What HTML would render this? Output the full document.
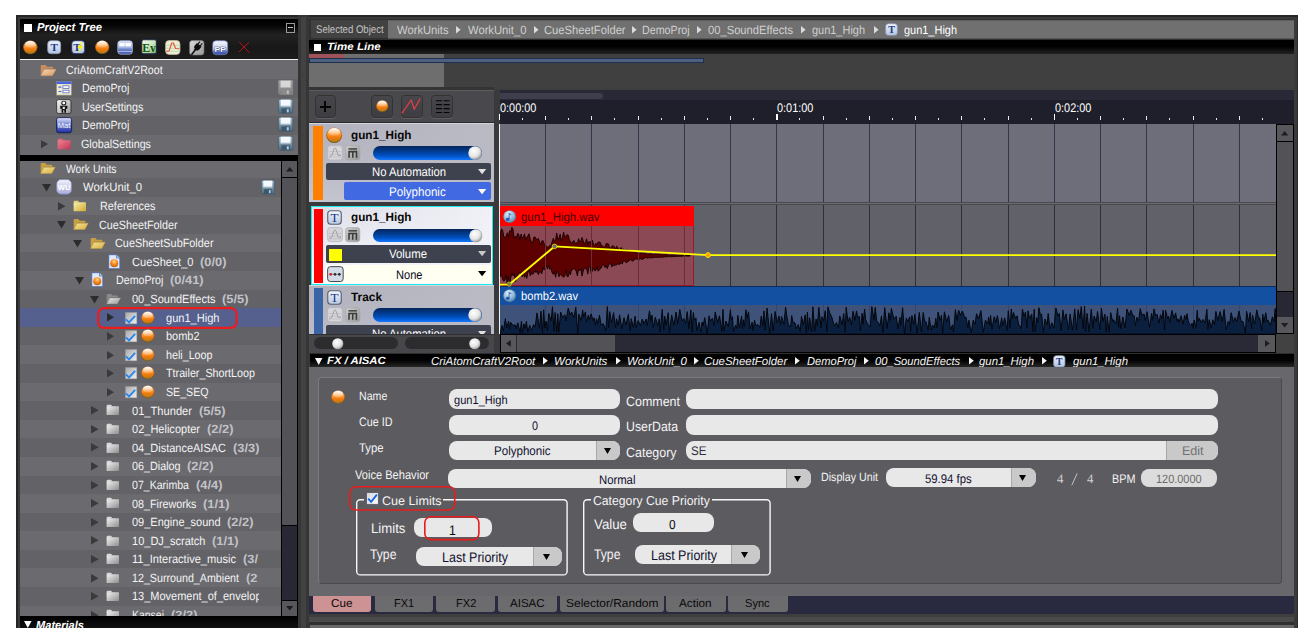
<!DOCTYPE html><html><head><meta charset="utf-8"><title>CRI Atom Craft</title><style>html,body{margin:0;padding:0;background:#fff;}#app{position:relative;width:1312px;height:640px;overflow:hidden;background:#fff;}#app div,#app svg{position:absolute;}#app svg{overflow:visible;display:block}.clip{overflow:hidden}.t{text-rendering:geometricPrecision}</style></head><body><div id="app">
<div style="left:16.00px;top:15.00px;width:1282.00px;height:613.00px;background:#3a3a3a;"></div>
<div style="left:16.00px;top:15.00px;width:1282.00px;height:1.50px;background:#262626;"></div>
<div style="left:16.00px;top:15.00px;width:1.50px;height:613.00px;background:#262626;"></div>
<div style="left:1296.50px;top:15.00px;width:1.50px;height:613.00px;background:#2a2a2a;"></div>
<div style="left:298.00px;top:15.00px;width:11.40px;height:613.00px;background:#363636;"></div>
<div style="left:301.20px;top:16.50px;width:4.90px;height:611.50px;background:#424242;"></div>
<div style="left:19.50px;top:18.70px;width:278.50px;height:16.50px;background:linear-gradient(#000,#050505 40%,#222);"></div>
<div style="left:19.50px;top:35.20px;width:278.50px;height:24.00px;background:linear-gradient(#222,#181818 50%,#1c1c1c);"></div>
<div style="left:23.60px;top:23.60px;width:8.20px;height:8.20px;background:#fff;"></div>
<div class="t" style="left:36.50px;top:21px;font:italic bold 11.5px/14px 'Liberation Sans',sans-serif;color:#fff;white-space:nowrap;transform-origin:0 0;transform:scaleX(0.9809);">Project Tree</div>
<div style="left:286.30px;top:23.00px;width:8.60px;height:10.00px;border:1px solid #9a9a9a;box-sizing:border-box;"></div>
<div style="left:288.30px;top:27.40px;width:4.60px;height:1.10px;background:#c0c0c0;"></div>
<svg style="left:23.20px;top:40.40px;" width="14.60" height="14.60" viewBox="0 0 20 20" preserveAspectRatio="none"><defs><linearGradient id="g1" x1="0" y1="0" x2="0" y2="1"><stop offset="0" stop-color="#ffc890"/><stop offset="0.42" stop-color="#ff9a38"/><stop offset="0.62" stop-color="#f47c0c"/><stop offset="0.82" stop-color="#cc7a16"/><stop offset="1" stop-color="#988028"/></linearGradient><linearGradient id="g2" x1="0" y1="0" x2="0" y2="1"><stop offset="0" stop-color="#fff" stop-opacity="0.95"/><stop offset="1" stop-color="#fff" stop-opacity="0.1"/></linearGradient><radialGradient id="g3" cx="0.5" cy="0.5" r="0.5"><stop offset="0.82" stop-color="#000" stop-opacity="0"/><stop offset="1" stop-color="#402000" stop-opacity="0.45"/></radialGradient></defs><ellipse cx="10" cy="10" rx="9.7" ry="9.4" fill="url(#g1)"/><ellipse cx="10" cy="10" rx="9.7" ry="9.4" fill="url(#g3)"/><ellipse cx="10" cy="6" rx="7.2" ry="4.8" fill="url(#g2)"/></svg>
<svg style="left:47.00px;top:40.40px;" width="14.40" height="14.40" viewBox="0 0 20 20" preserveAspectRatio="none"><defs><linearGradient id="g4" x1="0" y1="0" x2="0" y2="1"><stop offset="0" stop-color="#eef3fa"/><stop offset="1" stop-color="#b4c4dc"/></linearGradient></defs><rect x="1" y="1" width="18" height="18" rx="4.5" fill="url(#g4)" stroke="#8898b8" stroke-width="1.2"/><text x="10" y="15.4" text-anchor="middle" font-family="Liberation Serif,serif" font-weight="bold" font-size="15.5" fill="#163a8c">T</text></svg>
<svg style="left:70.80px;top:40.40px;" width="14.40" height="14.40" viewBox="0 0 20 20" preserveAspectRatio="none"><defs><linearGradient id="g5" x1="0" y1="0" x2="0" y2="1"><stop offset="0" stop-color="#eef3fa"/><stop offset="1" stop-color="#b4c4dc"/></linearGradient></defs><rect x="1" y="1" width="18" height="18" rx="4.5" fill="url(#g5)" stroke="#1c2c6c" stroke-width="1.2"/><text x="8.4" y="15.4" text-anchor="middle" font-family="Liberation Serif,serif" font-weight="bold" font-size="15.5" fill="#163a8c">T</text><path d="M14 3 L9 11 L12 11 L10 18.5 L16.5 8.5 L13 8.5 L16 3Z" fill="#fff200"/></svg>
<svg style="left:95.00px;top:40.40px;" width="14.40" height="14.40" viewBox="0 0 20 20" preserveAspectRatio="none"><defs><linearGradient id="g6" x1="0" y1="0" x2="0" y2="1"><stop offset="0" stop-color="#ffc890"/><stop offset="0.42" stop-color="#ff9a38"/><stop offset="0.62" stop-color="#f47c0c"/><stop offset="0.82" stop-color="#cc7a16"/><stop offset="1" stop-color="#988028"/></linearGradient><linearGradient id="g7" x1="0" y1="0" x2="0" y2="1"><stop offset="0" stop-color="#fff" stop-opacity="0.95"/><stop offset="1" stop-color="#fff" stop-opacity="0.1"/></linearGradient><radialGradient id="g8" cx="0.5" cy="0.5" r="0.5"><stop offset="0.82" stop-color="#000" stop-opacity="0"/><stop offset="1" stop-color="#402000" stop-opacity="0.45"/></radialGradient></defs><ellipse cx="10" cy="10" rx="9.7" ry="9.4" fill="url(#g6)"/><ellipse cx="10" cy="10" rx="9.7" ry="9.4" fill="url(#g8)"/><ellipse cx="10" cy="6" rx="7.2" ry="4.8" fill="url(#g7)"/></svg>
<svg style="left:117.40px;top:39.80px;" width="16.20" height="15.00" viewBox="0 0 22 20" preserveAspectRatio="none"><defs><linearGradient id="g9" x1="0" y1="0" x2="0" y2="1"><stop offset="0" stop-color="#e2e8f8"/><stop offset="0.5" stop-color="#a4b4e0"/><stop offset="0.62" stop-color="#7086c8"/><stop offset="1" stop-color="#3a54a8"/></linearGradient></defs><rect x="1" y="1" width="20" height="18" rx="4" fill="url(#g9)" stroke="#a8b4dc" stroke-width="1"/><rect x="3.2" y="4.2" width="7.2" height="4.2" fill="#ffffff"/><rect x="11.6" y="4.2" width="7.2" height="4.2" fill="#ffffff"/><rect x="1.5" y="14.8" width="19" height="1.1" fill="#b8c4ec"/></svg>
<svg style="left:141.20px;top:39.40px;" width="16.20" height="15.60" viewBox="0 0 22 21" preserveAspectRatio="none"><defs><linearGradient id="g10" x1="0" y1="0" x2="1" y2="1"><stop offset="0" stop-color="#f4faee"/><stop offset="0.5" stop-color="#cfe6c0"/><stop offset="1" stop-color="#7cac6c"/></linearGradient></defs><rect x="1" y="1" width="20" height="19" rx="2.5" fill="url(#g10)" stroke="#1e2e4a" stroke-width="1.6"/><text x="11" y="17" text-anchor="middle" font-family="Liberation Serif,serif" font-weight="bold" font-size="17" fill="#0a560a" textLength="18.6" lengthAdjust="spacingAndGlyphs">Ev</text></svg>
<svg style="left:165.20px;top:39.80px;" width="15.60" height="15.00" viewBox="0 0 20 20" preserveAspectRatio="none"><rect x="0.8" y="0.8" width="18.4" height="18.4" rx="4.5" fill="#f0ecd2" stroke="#c4c0a4" stroke-width="1"/><path d="M1.6 7H18.4M1.6 11H18.4M1.6 15H18.4" stroke="#a4dcb4" stroke-width="1.1"/><path d="M1.6 15.4 L5.4 14.4 L8.6 4 L10.8 4 L13.6 11.4 L18.4 11.6" fill="none" stroke="#e4503c" stroke-width="1.4" stroke-linejoin="round"/></svg>
<svg style="left:189.00px;top:39.60px;" width="15.60" height="15.60" viewBox="0 0 20 20" preserveAspectRatio="none"><defs><linearGradient id="g11" x1="0" y1="0" x2="1" y2="1"><stop offset="0" stop-color="#dcdcdc"/><stop offset="1" stop-color="#969696"/></linearGradient></defs><rect x="0.8" y="0.8" width="18.4" height="18.4" rx="3.5" fill="url(#g11)" stroke="#7a7a7a" stroke-width="0.8"/><g transform="translate(10.6 9.4) rotate(38)" fill="#0c0c0c"><rect x="-2.6" y="-8" width="1.5" height="4"/><rect x="1.1" y="-8" width="1.5" height="4"/><path d="M-3.8 -4.2 H3.8 V0.6 Q3.8 3.2 1.4 3.6 V5 H-1.4 V3.6 Q-3.8 3.2 -3.8 0.6Z"/><rect x="-1" y="4.6" width="2" height="7.4"/></g></svg>
<svg style="left:212.40px;top:39.60px;" width="16.40" height="15.40" viewBox="0 0 22 21" preserveAspectRatio="none"><defs><linearGradient id="g12" x1="0" y1="0" x2="0" y2="1"><stop offset="0" stop-color="#f6f8fd"/><stop offset="0.6" stop-color="#c6d0ea"/><stop offset="0.74" stop-color="#6078c4"/><stop offset="1" stop-color="#3048a4"/></linearGradient></defs><rect x="1" y="1" width="20" height="19" rx="4.5" fill="url(#g12)" stroke="#7484c0" stroke-width="1"/><text x="11" y="17" text-anchor="middle" font-family="Liberation Sans,sans-serif" font-weight="bold" font-size="10.5" fill="#fff" stroke="#1a2a6c" stroke-width="1" paint-order="stroke" textLength="15.5" lengthAdjust="spacingAndGlyphs">PP</text></svg>
<svg style="left:237.60px;top:41.00px;" width="12.60" height="12.60" viewBox="0 0 20 20" preserveAspectRatio="none"><path d="M2.5 2 L17.5 18 M17 2.5 L2 17" stroke="#c01616" stroke-width="1.5" stroke-linecap="round"/></svg>
<div style="left:19.50px;top:59.00px;width:278.50px;height:1.30px;background:#f0f0f0;"></div>
<div style="left:19.50px;top:60.30px;width:278.50px;height:18.70px;background:#6a6a6f;"></div>
<div style="left:19.50px;top:79.00px;width:278.50px;height:18.50px;background:#626267;"></div>
<div style="left:19.50px;top:97.50px;width:278.50px;height:18.50px;background:#6a6a6f;"></div>
<div style="left:19.50px;top:116.00px;width:278.50px;height:18.60px;background:#626267;"></div>
<div style="left:19.50px;top:134.60px;width:278.50px;height:20.00px;background:#6a6a6f;"></div>
<svg style="left:39.60px;top:63.60px;" width="16.60" height="12.40" viewBox="0 0 22 18" preserveAspectRatio="none"><defs><linearGradient id="g13" x1="0" y1="0" x2="1" y2="1"><stop offset="0" stop-color="#f6d8b0"/><stop offset="1" stop-color="#d89868"/></linearGradient></defs><path d="M1 16.5 V3 Q1 1.5 2.5 1.5 H7.5 L9.5 4 H16.5 Q17.5 4 17.5 5 V7 H6 L1 16.5Z" fill="#c88c60"/><path d="M1 17 L5.6 7.6 H21.4 L16.6 17Z" fill="url(#g13)" stroke="#c88c60" stroke-width="0.6"/></svg>
<div class="t" style="left:65.60px;top:63px;font:normal normal 12px/14px 'Liberation Sans',sans-serif;color:#f4f4f4;white-space:nowrap;transform-origin:0 0;transform:scaleX(0.8833);">CriAtomCraftV2Root</div>
<svg style="left:56.00px;top:81.00px;" width="16.00" height="14.60" viewBox="0 0 22 20" preserveAspectRatio="none"><rect x="0.6" y="0.6" width="20.8" height="18.8" fill="#efe9cf" stroke="#8e8c7c" stroke-width="0.9"/><rect x="0.6" y="0.6" width="20.8" height="3.6" fill="#4a66d8"/><rect x="9.5" y="6.6" width="8.4" height="3.6" fill="#fff" stroke="#4a66c8" stroke-width="1"/><rect x="9.5" y="12.6" width="8.4" height="3.6" fill="#fff" stroke="#4a66c8" stroke-width="1"/><path d="M3.4 8.4 H7.4 M3.4 14.4 H7.4" stroke="#4a66c8" stroke-width="1.4"/></svg>
<div class="t" style="left:82.20px;top:81px;font:normal normal 12px/14px 'Liberation Sans',sans-serif;color:#f4f4f4;white-space:nowrap;transform-origin:0 0;transform:scaleX(0.8884);">DemoProj</div>
<svg style="left:56.40px;top:99.40px;" width="15.60" height="15.20" viewBox="0 0 20 20" preserveAspectRatio="none"><defs><linearGradient id="g14" x1="0" y1="0" x2="1" y2="1"><stop offset="0" stop-color="#f8f8f8"/><stop offset="1" stop-color="#9a9a9a"/></linearGradient></defs><rect x="0.8" y="0.8" width="18.4" height="18.4" rx="2.5" fill="url(#g14)" stroke="#222" stroke-width="1"/><circle cx="10" cy="5.4" r="2.6" fill="#fff" stroke="#111" stroke-width="1.3"/><path d="M5.4 9 H14.6 V13 H12.8 V18 H7.2 V13 H5.4Z" fill="#111"/><rect x="8.6" y="10.2" width="2.8" height="3" fill="#e8e8e8"/><rect x="9.4" y="14.6" width="1.2" height="3.4" fill="#e8e8e8"/></svg>
<div class="t" style="left:82.20px;top:100px;font:normal normal 12px/14px 'Liberation Sans',sans-serif;color:#f4f4f4;white-space:nowrap;transform-origin:0 0;transform:scaleX(0.8938);">UserSettings</div>
<svg style="left:56.00px;top:117.40px;" width="16.20" height="16.40" viewBox="0 0 22 22" preserveAspectRatio="none"><defs><linearGradient id="g15" x1="0" y1="0" x2="0" y2="1"><stop offset="0" stop-color="#dfe4f8"/><stop offset="0.5" stop-color="#6a7cd0"/><stop offset="1" stop-color="#1c2c9c"/></linearGradient></defs><rect x="0.8" y="0.8" width="20.4" height="20.4" rx="3" fill="url(#g15)" stroke="#141c50" stroke-width="1.2"/><text x="11" y="15" text-anchor="middle" font-family="Liberation Sans,sans-serif" font-size="9.5" fill="#fff" textLength="17" lengthAdjust="spacingAndGlyphs">Mat</text></svg>
<div class="t" style="left:82.20px;top:118px;font:normal normal 12px/14px 'Liberation Sans',sans-serif;color:#f4f4f4;white-space:nowrap;transform-origin:0 0;transform:scaleX(0.8884);">DemoProj</div>
<svg style="left:41.40px;top:140.00px;" width="7.00" height="8.20" viewBox="0 0 7 8.2" preserveAspectRatio="none"><path d="M0 0 L7 4.1 L0 8.2Z" fill="#3a3a3a"/></svg>
<svg style="left:56.60px;top:138.20px;" width="14.40" height="11.60" viewBox="0 0 18 16" preserveAspectRatio="none"><defs><linearGradient id="g16" x1="0" y1="0" x2="1" y2="1"><stop offset="0" stop-color="#f08090"/><stop offset="1" stop-color="#c03858"/></linearGradient></defs><path d="M0.8 3 Q0.8 1 2.4 1 H6.6 L8.6 3.4 H0.8Z" fill="#e06878"/><rect x="0.8" y="3.2" width="16.4" height="12.2" rx="0.8" fill="url(#g16)"/></svg>
<div class="t" style="left:81.40px;top:137px;font:normal normal 12px/14px 'Liberation Sans',sans-serif;color:#f4f4f4;white-space:nowrap;transform-origin:0 0;transform:scaleX(0.8969);">GlobalSettings</div>
<svg style="left:278.00px;top:80.00px;" width="15.20" height="15.00" viewBox="0 0 20 20" preserveAspectRatio="none"><defs><linearGradient id="g17" x1="0" y1="0" x2="0" y2="1"><stop offset="0" stop-color="#a4a4a4"/><stop offset="1" stop-color="#7c7c7c"/></linearGradient></defs><path d="M0.6 0.6 H19.4 V19.4 H2.4 L0.6 17.6Z" fill="url(#g17)" stroke="#8c8c8c" stroke-width="0.8"/><rect x="3.4" y="0.8" width="13.2" height="9.4" fill="#d8d8d8"/><rect x="3.4" y="9.2" width="13.2" height="1.2" fill="#b0b0b0"/><rect x="4.6" y="12.8" width="11" height="6.6" fill="#8a8a8a"/><rect x="11.6" y="14" width="2.6" height="4.4" fill="#c4c4c4"/></svg>
<svg style="left:278.00px;top:98.80px;" width="15.20" height="14.60" viewBox="0 0 20 20" preserveAspectRatio="none"><defs><linearGradient id="g18" x1="0" y1="0" x2="0" y2="1"><stop offset="0" stop-color="#a8bccc"/><stop offset="1" stop-color="#4c6a80"/></linearGradient></defs><path d="M0.6 0.6 H19.4 V19.4 H2.4 L0.6 17.6Z" fill="url(#g18)" stroke="#3c5464" stroke-width="0.8"/><rect x="3.4" y="0.8" width="13.2" height="9.4" fill="#f4f8ff"/><rect x="3.4" y="9.2" width="13.2" height="1.2" fill="#9cb4c8"/><rect x="4.6" y="12.8" width="11" height="6.6" fill="#3e5668"/><rect x="11.6" y="14" width="2.6" height="4.4" fill="#a8d0f4"/></svg>
<svg style="left:278.00px;top:117.40px;" width="15.20" height="14.60" viewBox="0 0 20 20" preserveAspectRatio="none"><defs><linearGradient id="g19" x1="0" y1="0" x2="0" y2="1"><stop offset="0" stop-color="#a8bccc"/><stop offset="1" stop-color="#4c6a80"/></linearGradient></defs><path d="M0.6 0.6 H19.4 V19.4 H2.4 L0.6 17.6Z" fill="url(#g19)" stroke="#3c5464" stroke-width="0.8"/><rect x="3.4" y="0.8" width="13.2" height="9.4" fill="#f4f8ff"/><rect x="3.4" y="9.2" width="13.2" height="1.2" fill="#9cb4c8"/><rect x="4.6" y="12.8" width="11" height="6.6" fill="#3e5668"/><rect x="11.6" y="14" width="2.6" height="4.4" fill="#a8d0f4"/></svg>
<svg style="left:278.00px;top:136.00px;" width="15.20" height="14.60" viewBox="0 0 20 20" preserveAspectRatio="none"><defs><linearGradient id="g20" x1="0" y1="0" x2="0" y2="1"><stop offset="0" stop-color="#a8bccc"/><stop offset="1" stop-color="#4c6a80"/></linearGradient></defs><path d="M0.6 0.6 H19.4 V19.4 H2.4 L0.6 17.6Z" fill="url(#g20)" stroke="#3c5464" stroke-width="0.8"/><rect x="3.4" y="0.8" width="13.2" height="9.4" fill="#f4f8ff"/><rect x="3.4" y="9.2" width="13.2" height="1.2" fill="#9cb4c8"/><rect x="4.6" y="12.8" width="11" height="6.6" fill="#3e5668"/><rect x="11.6" y="14" width="2.6" height="4.4" fill="#a8d0f4"/></svg>
<div style="left:19.50px;top:154.60px;width:278.50px;height:6.00px;background:#000;"></div>
<div style="left:19.50px;top:160.60px;width:261.50px;height:17.49px;background:#6a6a6f;"></div>
<div style="left:19.50px;top:178.09px;width:261.50px;height:18.59px;background:#626267;"></div>
<div style="left:19.50px;top:196.68px;width:261.50px;height:18.59px;background:#6a6a6f;"></div>
<div style="left:19.50px;top:215.27px;width:261.50px;height:18.59px;background:#626267;"></div>
<div style="left:19.50px;top:233.86px;width:261.50px;height:18.59px;background:#6a6a6f;"></div>
<div style="left:19.50px;top:252.45px;width:261.50px;height:18.59px;background:#626267;"></div>
<div style="left:19.50px;top:271.04px;width:261.50px;height:18.59px;background:#6a6a6f;"></div>
<div style="left:19.50px;top:289.63px;width:261.50px;height:18.59px;background:#626267;"></div>
<div style="left:19.50px;top:308.22px;width:261.50px;height:18.59px;background:#55608e;"></div>
<div style="left:19.50px;top:326.81px;width:261.50px;height:18.59px;background:#626267;"></div>
<div style="left:19.50px;top:345.40px;width:261.50px;height:18.59px;background:#6a6a6f;"></div>
<div style="left:19.50px;top:363.99px;width:261.50px;height:18.59px;background:#626267;"></div>
<div style="left:19.50px;top:382.58px;width:261.50px;height:18.59px;background:#6a6a6f;"></div>
<div style="left:19.50px;top:401.17px;width:261.50px;height:18.59px;background:#626267;"></div>
<div style="left:19.50px;top:419.76px;width:261.50px;height:18.59px;background:#6a6a6f;"></div>
<div style="left:19.50px;top:438.35px;width:261.50px;height:18.59px;background:#626267;"></div>
<div style="left:19.50px;top:456.94px;width:261.50px;height:18.59px;background:#6a6a6f;"></div>
<div style="left:19.50px;top:475.53px;width:261.50px;height:18.59px;background:#626267;"></div>
<div style="left:19.50px;top:494.12px;width:261.50px;height:18.59px;background:#6a6a6f;"></div>
<div style="left:19.50px;top:512.71px;width:261.50px;height:18.59px;background:#626267;"></div>
<div style="left:19.50px;top:531.30px;width:261.50px;height:18.59px;background:#6a6a6f;"></div>
<div style="left:19.50px;top:549.89px;width:261.50px;height:18.59px;background:#626267;"></div>
<div style="left:19.50px;top:568.48px;width:261.50px;height:18.59px;background:#6a6a6f;"></div>
<div style="left:19.50px;top:587.07px;width:261.50px;height:18.59px;background:#626267;"></div>
<div style="left:19.50px;top:605.66px;width:261.50px;height:10.34px;background:#6a6a6f;"></div>
<div class="clip" style="left:0;top:0;width:259px;height:616px">
<svg style="left:40.40px;top:162.39px;" width="15.60" height="12.20" viewBox="0 0 22 18" preserveAspectRatio="none"><defs><linearGradient id="g21" x1="0" y1="0" x2="1" y2="1"><stop offset="0" stop-color="#f4e49a"/><stop offset="1" stop-color="#d8b040"/></linearGradient></defs><path d="M1 16.5 V3 Q1 1.5 2.5 1.5 H7.5 L9.5 4 H16.5 Q17.5 4 17.5 5 V7 H6 L1 16.5Z" fill="#c8a040"/><path d="M1 17 L5.6 7.6 H21.4 L16.6 17Z" fill="url(#g21)" stroke="#c8a040" stroke-width="0.6"/></svg>
<div class="t" style="left:65.75px;top:162px;font:normal normal 12px/14px 'Liberation Sans',sans-serif;color:#f4f4f4;white-space:nowrap;transform-origin:0 0;transform:scaleX(0.8639);">Work Units</div>
<svg style="left:56.40px;top:179.38px;" width="16.20" height="15.80" viewBox="0 0 22 21" preserveAspectRatio="none"><defs><linearGradient id="g22" x1="0" y1="0" x2="0" y2="1"><stop offset="0" stop-color="#f2f2fc"/><stop offset="1" stop-color="#a8acd8"/></linearGradient></defs><rect x="0.8" y="0.8" width="20.4" height="19.4" rx="6" fill="url(#g22)" stroke="#7a80b8" stroke-width="0.8"/><text x="11" y="14.6" text-anchor="middle" font-family="Liberation Sans,sans-serif" font-weight="bold" font-size="10.5" fill="#fff" textLength="17" lengthAdjust="spacingAndGlyphs">WU</text></svg>
<svg style="left:41.80px;top:184.19px;" width="9.00" height="7.60" viewBox="0 0 9 7.6" preserveAspectRatio="none"><path d="M0 0 H9 L4.5 7.6Z" fill="#2c2c2c"/></svg>
<div class="t" style="left:82.50px;top:180px;font:normal normal 12px/14px 'Liberation Sans',sans-serif;color:#f4f4f4;white-space:nowrap;transform-origin:0 0;transform:scaleX(0.9445);">WorkUnit_0</div>
<svg style="left:73.40px;top:199.97px;" width="13.60" height="11.60" viewBox="0 0 18 16" preserveAspectRatio="none"><defs><linearGradient id="g23" x1="0" y1="0" x2="1" y2="1"><stop offset="0" stop-color="#fbf2b0"/><stop offset="1" stop-color="#d0a830"/></linearGradient></defs><path d="M0.8 3 Q0.8 1 2.4 1 H6.6 L8.6 3.4 H0.8Z" fill="#e8d070"/><rect x="0.8" y="3.2" width="16.4" height="12.2" rx="0.8" fill="url(#g23)"/></svg>
<svg style="left:57.60px;top:201.78px;" width="7.60" height="8.40" viewBox="0 0 7.6 8.4" preserveAspectRatio="none"><path d="M0 0 L7.6 4.2 L0 8.4Z" fill="#3a3a3a"/></svg>
<div class="t" style="left:99.50px;top:199px;font:normal normal 12px/14px 'Liberation Sans',sans-serif;color:#f4f4f4;white-space:nowrap;transform-origin:0 0;transform:scaleX(0.9044);">References</div>
<svg style="left:73.40px;top:218.16px;" width="15.60" height="12.20" viewBox="0 0 22 18" preserveAspectRatio="none"><defs><linearGradient id="g24" x1="0" y1="0" x2="1" y2="1"><stop offset="0" stop-color="#f4e49a"/><stop offset="1" stop-color="#d8b040"/></linearGradient></defs><path d="M1 16.5 V3 Q1 1.5 2.5 1.5 H7.5 L9.5 4 H16.5 Q17.5 4 17.5 5 V7 H6 L1 16.5Z" fill="#c8a040"/><path d="M1 17 L5.6 7.6 H21.4 L16.6 17Z" fill="url(#g24)" stroke="#c8a040" stroke-width="0.6"/></svg>
<svg style="left:57.00px;top:221.36px;" width="9.00" height="7.60" viewBox="0 0 9 7.6" preserveAspectRatio="none"><path d="M0 0 H9 L4.5 7.6Z" fill="#2c2c2c"/></svg>
<div class="t" style="left:98.75px;top:218px;font:normal normal 12px/14px 'Liberation Sans',sans-serif;color:#f4f4f4;white-space:nowrap;transform-origin:0 0;transform:scaleX(0.8983);">CueSheetFolder</div>
<svg style="left:89.60px;top:236.75px;" width="15.60" height="12.20" viewBox="0 0 22 18" preserveAspectRatio="none"><defs><linearGradient id="g25" x1="0" y1="0" x2="1" y2="1"><stop offset="0" stop-color="#f4e49a"/><stop offset="1" stop-color="#d8b040"/></linearGradient></defs><path d="M1 16.5 V3 Q1 1.5 2.5 1.5 H7.5 L9.5 4 H16.5 Q17.5 4 17.5 5 V7 H6 L1 16.5Z" fill="#c8a040"/><path d="M1 17 L5.6 7.6 H21.4 L16.6 17Z" fill="url(#g25)" stroke="#c8a040" stroke-width="0.6"/></svg>
<svg style="left:73.20px;top:239.96px;" width="9.00" height="7.60" viewBox="0 0 9 7.6" preserveAspectRatio="none"><path d="M0 0 H9 L4.5 7.6Z" fill="#2c2c2c"/></svg>
<div class="t" style="left:114.50px;top:236px;font:normal normal 12px/14px 'Liberation Sans',sans-serif;color:#f4f4f4;white-space:nowrap;transform-origin:0 0;transform:scaleX(0.9058);">CueSheetSubFolder</div>
<svg style="left:108.00px;top:253.75px;" width="12.60" height="15.40" viewBox="0 0 17 21" preserveAspectRatio="none"><path d="M1 1 H11.5 L16 5.5 V20 H1Z" fill="#dfe8f6" stroke="#4866a8" stroke-width="1.1"/><path d="M11.5 1 V5.5 H16" fill="#b8c8e4" stroke="#4866a8" stroke-width="0.9"/><defs><radialGradient id="g26" cx="0.5" cy="0.3" r="0.7"><stop offset="0" stop-color="#ffd9a0"/><stop offset="0.45" stop-color="#ff9020"/><stop offset="1" stop-color="#c06010"/></radialGradient></defs><circle cx="8.4" cy="12.6" r="5.4" fill="url(#g26)"/></svg>
<div class="t" style="left:131.75px;top:255px;font:normal normal 12px/14px 'Liberation Sans',sans-serif;color:#f4f4f4;white-space:nowrap;transform-origin:0 0;transform:scaleX(0.9217);">CueSheet_0</div>
<div class="t" style="left:199.85px;top:255px;font:normal bold 12px/14px 'Liberation Sans',sans-serif;color:#c2c2c8;white-space:nowrap;transform-origin:0 0;transform:scaleX(1.0700);">(0/0)</div>
<svg style="left:91.00px;top:272.33px;" width="12.60" height="15.40" viewBox="0 0 17 21" preserveAspectRatio="none"><path d="M1 1 H11.5 L16 5.5 V20 H1Z" fill="#dfe8f6" stroke="#4866a8" stroke-width="1.1"/><path d="M11.5 1 V5.5 H16" fill="#b8c8e4" stroke="#4866a8" stroke-width="0.9"/><defs><radialGradient id="g27" cx="0.5" cy="0.3" r="0.7"><stop offset="0" stop-color="#ffd9a0"/><stop offset="0.45" stop-color="#ff9020"/><stop offset="1" stop-color="#c06010"/></radialGradient></defs><circle cx="8.4" cy="12.6" r="5.4" fill="url(#g27)"/></svg>
<svg style="left:74.60px;top:277.13px;" width="9.00" height="7.60" viewBox="0 0 9 7.6" preserveAspectRatio="none"><path d="M0 0 H9 L4.5 7.6Z" fill="#2c2c2c"/></svg>
<div class="t" style="left:115.50px;top:273px;font:normal normal 12px/14px 'Liberation Sans',sans-serif;color:#f4f4f4;white-space:nowrap;transform-origin:0 0;transform:scaleX(0.8884);">DemoProj</div>
<div class="t" style="left:169.50px;top:273px;font:normal bold 12px/14px 'Liberation Sans',sans-serif;color:#c2c2c8;white-space:nowrap;transform-origin:0 0;transform:scaleX(1.0700);">(0/41)</div>
<svg style="left:106.40px;top:292.93px;" width="15.00" height="11.60" viewBox="0 0 22 18" preserveAspectRatio="none"><defs><linearGradient id="g28" x1="0" y1="0" x2="1" y2="1"><stop offset="0" stop-color="#e8e8e8"/><stop offset="1" stop-color="#9a9a9a"/></linearGradient></defs><path d="M1 16.5 V3 Q1 1.5 2.5 1.5 H7.5 L9.5 4 H16.5 Q17.5 4 17.5 5 V7 H6 L1 16.5Z" fill="#8a8a8a"/><path d="M1 17 L5.6 7.6 H21.4 L16.6 17Z" fill="url(#g28)" stroke="#8a8a8a" stroke-width="0.6"/></svg>
<svg style="left:90.00px;top:295.73px;" width="9.00" height="7.60" viewBox="0 0 9 7.6" preserveAspectRatio="none"><path d="M0 0 H9 L4.5 7.6Z" fill="#2c2c2c"/></svg>
<div class="t" style="left:132.00px;top:292px;font:normal normal 12px/14px 'Liberation Sans',sans-serif;color:#f4f4f4;white-space:nowrap;transform-origin:0 0;transform:scaleX(0.9157);">00_SoundEffects</div>
<div class="t" style="left:222.10px;top:292px;font:normal bold 12px/14px 'Liberation Sans',sans-serif;color:#c2c2c8;white-space:nowrap;transform-origin:0 0;transform:scaleX(1.0700);">(5/5)</div>
<svg style="left:107.40px;top:313.32px;" width="7.00" height="8.40" viewBox="0 0 7 8.4" preserveAspectRatio="none"><path d="M0 0 L7 4.2 L0 8.4Z" fill="#2a2a2a"/></svg>
<svg style="left:124.70px;top:311.62px;" width="12.20" height="12.20" viewBox="0 0 20 20" preserveAspectRatio="none"><defs><linearGradient id="g29" x1="0" y1="0" x2="1" y2="1"><stop offset="0" stop-color="#a8a8a8"/><stop offset="1" stop-color="#f0f0f0"/></linearGradient></defs><rect x="0.5" y="0.5" width="19" height="19" fill="url(#g29)" stroke="#8c8c90" stroke-width="0.8"/><path d="M1.6 12.2 L6.6 17 L16.6 6.4" fill="none" stroke="#2486ee" stroke-width="3" stroke-linejoin="miter"/></svg>
<svg style="left:141.40px;top:310.52px;" width="13.60" height="13.60" viewBox="0 0 20 20" preserveAspectRatio="none"><defs><linearGradient id="g30" x1="0" y1="0" x2="0" y2="1"><stop offset="0" stop-color="#ffc890"/><stop offset="0.42" stop-color="#ff9a38"/><stop offset="0.62" stop-color="#f47c0c"/><stop offset="0.82" stop-color="#cc7a16"/><stop offset="1" stop-color="#988028"/></linearGradient><linearGradient id="g31" x1="0" y1="0" x2="0" y2="1"><stop offset="0" stop-color="#fff" stop-opacity="0.95"/><stop offset="1" stop-color="#fff" stop-opacity="0.1"/></linearGradient><radialGradient id="g32" cx="0.5" cy="0.5" r="0.5"><stop offset="0.82" stop-color="#000" stop-opacity="0"/><stop offset="1" stop-color="#402000" stop-opacity="0.45"/></radialGradient></defs><ellipse cx="10" cy="10" rx="9.7" ry="9.4" fill="url(#g30)"/><ellipse cx="10" cy="10" rx="9.7" ry="9.4" fill="url(#g32)"/><ellipse cx="10" cy="6" rx="7.2" ry="4.8" fill="url(#g31)"/></svg>
<div class="t" style="left:165.60px;top:311px;font:normal normal 12px/14px 'Liberation Sans',sans-serif;color:#f4f4f4;white-space:nowrap;transform-origin:0 0;transform:scaleX(0.9216);">gun1_High</div>
<svg style="left:107.40px;top:331.91px;" width="7.00" height="8.40" viewBox="0 0 7 8.4" preserveAspectRatio="none"><path d="M0 0 L7 4.2 L0 8.4Z" fill="#3a3a3a"/></svg>
<svg style="left:124.70px;top:330.21px;" width="12.20" height="12.20" viewBox="0 0 20 20" preserveAspectRatio="none"><defs><linearGradient id="g33" x1="0" y1="0" x2="1" y2="1"><stop offset="0" stop-color="#a8a8a8"/><stop offset="1" stop-color="#f0f0f0"/></linearGradient></defs><rect x="0.5" y="0.5" width="19" height="19" fill="url(#g33)" stroke="#8c8c90" stroke-width="0.8"/><path d="M1.6 12.2 L6.6 17 L16.6 6.4" fill="none" stroke="#2486ee" stroke-width="3" stroke-linejoin="miter"/></svg>
<svg style="left:141.40px;top:329.11px;" width="13.60" height="13.60" viewBox="0 0 20 20" preserveAspectRatio="none"><defs><linearGradient id="g34" x1="0" y1="0" x2="0" y2="1"><stop offset="0" stop-color="#ffc890"/><stop offset="0.42" stop-color="#ff9a38"/><stop offset="0.62" stop-color="#f47c0c"/><stop offset="0.82" stop-color="#cc7a16"/><stop offset="1" stop-color="#988028"/></linearGradient><linearGradient id="g35" x1="0" y1="0" x2="0" y2="1"><stop offset="0" stop-color="#fff" stop-opacity="0.95"/><stop offset="1" stop-color="#fff" stop-opacity="0.1"/></linearGradient><radialGradient id="g36" cx="0.5" cy="0.5" r="0.5"><stop offset="0.82" stop-color="#000" stop-opacity="0"/><stop offset="1" stop-color="#402000" stop-opacity="0.45"/></radialGradient></defs><ellipse cx="10" cy="10" rx="9.7" ry="9.4" fill="url(#g34)"/><ellipse cx="10" cy="10" rx="9.7" ry="9.4" fill="url(#g36)"/><ellipse cx="10" cy="6" rx="7.2" ry="4.8" fill="url(#g35)"/></svg>
<div class="t" style="left:165.60px;top:329px;font:normal normal 12px/14px 'Liberation Sans',sans-serif;color:#f4f4f4;white-space:nowrap;transform-origin:0 0;transform:scaleX(0.9130);">bomb2</div>
<svg style="left:107.40px;top:350.50px;" width="7.00" height="8.40" viewBox="0 0 7 8.4" preserveAspectRatio="none"><path d="M0 0 L7 4.2 L0 8.4Z" fill="#3a3a3a"/></svg>
<svg style="left:124.70px;top:348.80px;" width="12.20" height="12.20" viewBox="0 0 20 20" preserveAspectRatio="none"><defs><linearGradient id="g37" x1="0" y1="0" x2="1" y2="1"><stop offset="0" stop-color="#a8a8a8"/><stop offset="1" stop-color="#f0f0f0"/></linearGradient></defs><rect x="0.5" y="0.5" width="19" height="19" fill="url(#g37)" stroke="#8c8c90" stroke-width="0.8"/><path d="M1.6 12.2 L6.6 17 L16.6 6.4" fill="none" stroke="#2486ee" stroke-width="3" stroke-linejoin="miter"/></svg>
<svg style="left:141.40px;top:347.69px;" width="13.60" height="13.60" viewBox="0 0 20 20" preserveAspectRatio="none"><defs><linearGradient id="g38" x1="0" y1="0" x2="0" y2="1"><stop offset="0" stop-color="#ffc890"/><stop offset="0.42" stop-color="#ff9a38"/><stop offset="0.62" stop-color="#f47c0c"/><stop offset="0.82" stop-color="#cc7a16"/><stop offset="1" stop-color="#988028"/></linearGradient><linearGradient id="g39" x1="0" y1="0" x2="0" y2="1"><stop offset="0" stop-color="#fff" stop-opacity="0.95"/><stop offset="1" stop-color="#fff" stop-opacity="0.1"/></linearGradient><radialGradient id="g40" cx="0.5" cy="0.5" r="0.5"><stop offset="0.82" stop-color="#000" stop-opacity="0"/><stop offset="1" stop-color="#402000" stop-opacity="0.45"/></radialGradient></defs><ellipse cx="10" cy="10" rx="9.7" ry="9.4" fill="url(#g38)"/><ellipse cx="10" cy="10" rx="9.7" ry="9.4" fill="url(#g40)"/><ellipse cx="10" cy="6" rx="7.2" ry="4.8" fill="url(#g39)"/></svg>
<div class="t" style="left:165.60px;top:348px;font:normal normal 12px/14px 'Liberation Sans',sans-serif;color:#f4f4f4;white-space:nowrap;transform-origin:0 0;transform:scaleX(0.8934);">heli_Loop</div>
<svg style="left:107.40px;top:369.09px;" width="7.00" height="8.40" viewBox="0 0 7 8.4" preserveAspectRatio="none"><path d="M0 0 L7 4.2 L0 8.4Z" fill="#3a3a3a"/></svg>
<svg style="left:124.70px;top:367.39px;" width="12.20" height="12.20" viewBox="0 0 20 20" preserveAspectRatio="none"><defs><linearGradient id="g41" x1="0" y1="0" x2="1" y2="1"><stop offset="0" stop-color="#a8a8a8"/><stop offset="1" stop-color="#f0f0f0"/></linearGradient></defs><rect x="0.5" y="0.5" width="19" height="19" fill="url(#g41)" stroke="#8c8c90" stroke-width="0.8"/><path d="M1.6 12.2 L6.6 17 L16.6 6.4" fill="none" stroke="#2486ee" stroke-width="3" stroke-linejoin="miter"/></svg>
<svg style="left:141.40px;top:366.29px;" width="13.60" height="13.60" viewBox="0 0 20 20" preserveAspectRatio="none"><defs><linearGradient id="g42" x1="0" y1="0" x2="0" y2="1"><stop offset="0" stop-color="#ffc890"/><stop offset="0.42" stop-color="#ff9a38"/><stop offset="0.62" stop-color="#f47c0c"/><stop offset="0.82" stop-color="#cc7a16"/><stop offset="1" stop-color="#988028"/></linearGradient><linearGradient id="g43" x1="0" y1="0" x2="0" y2="1"><stop offset="0" stop-color="#fff" stop-opacity="0.95"/><stop offset="1" stop-color="#fff" stop-opacity="0.1"/></linearGradient><radialGradient id="g44" cx="0.5" cy="0.5" r="0.5"><stop offset="0.82" stop-color="#000" stop-opacity="0"/><stop offset="1" stop-color="#402000" stop-opacity="0.45"/></radialGradient></defs><ellipse cx="10" cy="10" rx="9.7" ry="9.4" fill="url(#g42)"/><ellipse cx="10" cy="10" rx="9.7" ry="9.4" fill="url(#g44)"/><ellipse cx="10" cy="6" rx="7.2" ry="4.8" fill="url(#g43)"/></svg>
<div class="t" style="left:165.60px;top:366px;font:normal normal 12px/14px 'Liberation Sans',sans-serif;color:#f4f4f4;white-space:nowrap;transform-origin:0 0;transform:scaleX(0.8955);">Ttrailer_ShortLoop</div>
<svg style="left:107.40px;top:387.68px;" width="7.00" height="8.40" viewBox="0 0 7 8.4" preserveAspectRatio="none"><path d="M0 0 L7 4.2 L0 8.4Z" fill="#3a3a3a"/></svg>
<svg style="left:124.70px;top:385.98px;" width="12.20" height="12.20" viewBox="0 0 20 20" preserveAspectRatio="none"><defs><linearGradient id="g45" x1="0" y1="0" x2="1" y2="1"><stop offset="0" stop-color="#a8a8a8"/><stop offset="1" stop-color="#f0f0f0"/></linearGradient></defs><rect x="0.5" y="0.5" width="19" height="19" fill="url(#g45)" stroke="#8c8c90" stroke-width="0.8"/><path d="M1.6 12.2 L6.6 17 L16.6 6.4" fill="none" stroke="#2486ee" stroke-width="3" stroke-linejoin="miter"/></svg>
<svg style="left:141.40px;top:384.88px;" width="13.60" height="13.60" viewBox="0 0 20 20" preserveAspectRatio="none"><defs><linearGradient id="g46" x1="0" y1="0" x2="0" y2="1"><stop offset="0" stop-color="#ffc890"/><stop offset="0.42" stop-color="#ff9a38"/><stop offset="0.62" stop-color="#f47c0c"/><stop offset="0.82" stop-color="#cc7a16"/><stop offset="1" stop-color="#988028"/></linearGradient><linearGradient id="g47" x1="0" y1="0" x2="0" y2="1"><stop offset="0" stop-color="#fff" stop-opacity="0.95"/><stop offset="1" stop-color="#fff" stop-opacity="0.1"/></linearGradient><radialGradient id="g48" cx="0.5" cy="0.5" r="0.5"><stop offset="0.82" stop-color="#000" stop-opacity="0"/><stop offset="1" stop-color="#402000" stop-opacity="0.45"/></radialGradient></defs><ellipse cx="10" cy="10" rx="9.7" ry="9.4" fill="url(#g46)"/><ellipse cx="10" cy="10" rx="9.7" ry="9.4" fill="url(#g48)"/><ellipse cx="10" cy="6" rx="7.2" ry="4.8" fill="url(#g47)"/></svg>
<div class="t" style="left:165.60px;top:385px;font:normal normal 12px/14px 'Liberation Sans',sans-serif;color:#f4f4f4;white-space:nowrap;transform-origin:0 0;transform:scaleX(0.8849);">SE_SEQ</div>
<svg style="left:106.40px;top:404.46px;" width="13.60" height="11.40" viewBox="0 0 18 16" preserveAspectRatio="none"><defs><linearGradient id="g49" x1="0" y1="0" x2="1" y2="1"><stop offset="0" stop-color="#f2f2f2"/><stop offset="1" stop-color="#8e8e8e"/></linearGradient></defs><path d="M0.8 3 Q0.8 1 2.4 1 H6.6 L8.6 3.4 H0.8Z" fill="#dcdcdc"/><rect x="0.8" y="3.2" width="16.4" height="12.2" rx="0.8" fill="url(#g49)"/></svg>
<svg style="left:90.60px;top:406.26px;" width="7.60" height="8.40" viewBox="0 0 7.6 8.4" preserveAspectRatio="none"><path d="M0 0 L7.6 4.2 L0 8.4Z" fill="#3a3a3a"/></svg>
<div class="t" style="left:132.00px;top:404px;font:normal normal 12px/14px 'Liberation Sans',sans-serif;color:#f4f4f4;white-space:nowrap;transform-origin:0 0;transform:scaleX(0.9271);">01_Thunder</div>
<div class="t" style="left:198.60px;top:404px;font:normal bold 12px/14px 'Liberation Sans',sans-serif;color:#c2c2c8;white-space:nowrap;transform-origin:0 0;transform:scaleX(1.0700);">(5/5)</div>
<svg style="left:106.40px;top:423.06px;" width="13.60" height="11.40" viewBox="0 0 18 16" preserveAspectRatio="none"><defs><linearGradient id="g50" x1="0" y1="0" x2="1" y2="1"><stop offset="0" stop-color="#f2f2f2"/><stop offset="1" stop-color="#8e8e8e"/></linearGradient></defs><path d="M0.8 3 Q0.8 1 2.4 1 H6.6 L8.6 3.4 H0.8Z" fill="#dcdcdc"/><rect x="0.8" y="3.2" width="16.4" height="12.2" rx="0.8" fill="url(#g50)"/></svg>
<svg style="left:90.60px;top:424.86px;" width="7.60" height="8.40" viewBox="0 0 7.6 8.4" preserveAspectRatio="none"><path d="M0 0 L7.6 4.2 L0 8.4Z" fill="#3a3a3a"/></svg>
<div class="t" style="left:132.00px;top:422px;font:normal normal 12px/14px 'Liberation Sans',sans-serif;color:#f4f4f4;white-space:nowrap;transform-origin:0 0;transform:scaleX(0.9183);">02_Helicopter</div>
<div class="t" style="left:206.60px;top:422px;font:normal bold 12px/14px 'Liberation Sans',sans-serif;color:#c2c2c8;white-space:nowrap;transform-origin:0 0;transform:scaleX(1.0700);">(2/2)</div>
<svg style="left:106.40px;top:441.65px;" width="13.60" height="11.40" viewBox="0 0 18 16" preserveAspectRatio="none"><defs><linearGradient id="g51" x1="0" y1="0" x2="1" y2="1"><stop offset="0" stop-color="#f2f2f2"/><stop offset="1" stop-color="#8e8e8e"/></linearGradient></defs><path d="M0.8 3 Q0.8 1 2.4 1 H6.6 L8.6 3.4 H0.8Z" fill="#dcdcdc"/><rect x="0.8" y="3.2" width="16.4" height="12.2" rx="0.8" fill="url(#g51)"/></svg>
<svg style="left:90.60px;top:443.45px;" width="7.60" height="8.40" viewBox="0 0 7.6 8.4" preserveAspectRatio="none"><path d="M0 0 L7.6 4.2 L0 8.4Z" fill="#3a3a3a"/></svg>
<div class="t" style="left:132.00px;top:441px;font:normal normal 12px/14px 'Liberation Sans',sans-serif;color:#f4f4f4;white-space:nowrap;transform-origin:0 0;transform:scaleX(0.9151);">04_DistanceAISAC</div>
<div class="t" style="left:232.60px;top:441px;font:normal bold 12px/14px 'Liberation Sans',sans-serif;color:#c2c2c8;white-space:nowrap;transform-origin:0 0;transform:scaleX(1.0700);">(3/3)</div>
<svg style="left:106.40px;top:460.24px;" width="13.60" height="11.40" viewBox="0 0 18 16" preserveAspectRatio="none"><defs><linearGradient id="g52" x1="0" y1="0" x2="1" y2="1"><stop offset="0" stop-color="#f2f2f2"/><stop offset="1" stop-color="#8e8e8e"/></linearGradient></defs><path d="M0.8 3 Q0.8 1 2.4 1 H6.6 L8.6 3.4 H0.8Z" fill="#dcdcdc"/><rect x="0.8" y="3.2" width="16.4" height="12.2" rx="0.8" fill="url(#g52)"/></svg>
<svg style="left:90.60px;top:462.04px;" width="7.60" height="8.40" viewBox="0 0 7.6 8.4" preserveAspectRatio="none"><path d="M0 0 L7.6 4.2 L0 8.4Z" fill="#3a3a3a"/></svg>
<div class="t" style="left:132.00px;top:459px;font:normal normal 12px/14px 'Liberation Sans',sans-serif;color:#f4f4f4;white-space:nowrap;transform-origin:0 0;transform:scaleX(0.8974);">06_Dialog</div>
<div class="t" style="left:187.10px;top:459px;font:normal bold 12px/14px 'Liberation Sans',sans-serif;color:#c2c2c8;white-space:nowrap;transform-origin:0 0;transform:scaleX(1.0700);">(2/2)</div>
<svg style="left:106.40px;top:478.82px;" width="13.60" height="11.40" viewBox="0 0 18 16" preserveAspectRatio="none"><defs><linearGradient id="g53" x1="0" y1="0" x2="1" y2="1"><stop offset="0" stop-color="#f2f2f2"/><stop offset="1" stop-color="#8e8e8e"/></linearGradient></defs><path d="M0.8 3 Q0.8 1 2.4 1 H6.6 L8.6 3.4 H0.8Z" fill="#dcdcdc"/><rect x="0.8" y="3.2" width="16.4" height="12.2" rx="0.8" fill="url(#g53)"/></svg>
<svg style="left:90.60px;top:480.62px;" width="7.60" height="8.40" viewBox="0 0 7.6 8.4" preserveAspectRatio="none"><path d="M0 0 L7.6 4.2 L0 8.4Z" fill="#3a3a3a"/></svg>
<div class="t" style="left:132.00px;top:478px;font:normal normal 12px/14px 'Liberation Sans',sans-serif;color:#f4f4f4;white-space:nowrap;transform-origin:0 0;transform:scaleX(0.8809);">07_Karimba</div>
<div class="t" style="left:195.60px;top:478px;font:normal bold 12px/14px 'Liberation Sans',sans-serif;color:#c2c2c8;white-space:nowrap;transform-origin:0 0;transform:scaleX(1.0700);">(4/4)</div>
<svg style="left:106.40px;top:497.42px;" width="13.60" height="11.40" viewBox="0 0 18 16" preserveAspectRatio="none"><defs><linearGradient id="g54" x1="0" y1="0" x2="1" y2="1"><stop offset="0" stop-color="#f2f2f2"/><stop offset="1" stop-color="#8e8e8e"/></linearGradient></defs><path d="M0.8 3 Q0.8 1 2.4 1 H6.6 L8.6 3.4 H0.8Z" fill="#dcdcdc"/><rect x="0.8" y="3.2" width="16.4" height="12.2" rx="0.8" fill="url(#g54)"/></svg>
<svg style="left:90.60px;top:499.22px;" width="7.60" height="8.40" viewBox="0 0 7.6 8.4" preserveAspectRatio="none"><path d="M0 0 L7.6 4.2 L0 8.4Z" fill="#3a3a3a"/></svg>
<div class="t" style="left:132.00px;top:497px;font:normal normal 12px/14px 'Liberation Sans',sans-serif;color:#f4f4f4;white-space:nowrap;transform-origin:0 0;transform:scaleX(0.8955);">08_Fireworks</div>
<div class="t" style="left:203.10px;top:497px;font:normal bold 12px/14px 'Liberation Sans',sans-serif;color:#c2c2c8;white-space:nowrap;transform-origin:0 0;transform:scaleX(1.0700);">(1/1)</div>
<svg style="left:106.40px;top:516.00px;" width="13.60" height="11.40" viewBox="0 0 18 16" preserveAspectRatio="none"><defs><linearGradient id="g55" x1="0" y1="0" x2="1" y2="1"><stop offset="0" stop-color="#f2f2f2"/><stop offset="1" stop-color="#8e8e8e"/></linearGradient></defs><path d="M0.8 3 Q0.8 1 2.4 1 H6.6 L8.6 3.4 H0.8Z" fill="#dcdcdc"/><rect x="0.8" y="3.2" width="16.4" height="12.2" rx="0.8" fill="url(#g55)"/></svg>
<svg style="left:90.60px;top:517.80px;" width="7.60" height="8.40" viewBox="0 0 7.6 8.4" preserveAspectRatio="none"><path d="M0 0 L7.6 4.2 L0 8.4Z" fill="#3a3a3a"/></svg>
<div class="t" style="left:132.00px;top:515px;font:normal normal 12px/14px 'Liberation Sans',sans-serif;color:#f4f4f4;white-space:nowrap;transform-origin:0 0;transform:scaleX(0.9146);">09_Engine_sound</div>
<div class="t" style="left:227.10px;top:515px;font:normal bold 12px/14px 'Liberation Sans',sans-serif;color:#c2c2c8;white-space:nowrap;transform-origin:0 0;transform:scaleX(1.0700);">(2/2)</div>
<svg style="left:106.40px;top:534.59px;" width="13.60" height="11.40" viewBox="0 0 18 16" preserveAspectRatio="none"><defs><linearGradient id="g56" x1="0" y1="0" x2="1" y2="1"><stop offset="0" stop-color="#f2f2f2"/><stop offset="1" stop-color="#8e8e8e"/></linearGradient></defs><path d="M0.8 3 Q0.8 1 2.4 1 H6.6 L8.6 3.4 H0.8Z" fill="#dcdcdc"/><rect x="0.8" y="3.2" width="16.4" height="12.2" rx="0.8" fill="url(#g56)"/></svg>
<svg style="left:90.60px;top:536.39px;" width="7.60" height="8.40" viewBox="0 0 7.6 8.4" preserveAspectRatio="none"><path d="M0 0 L7.6 4.2 L0 8.4Z" fill="#3a3a3a"/></svg>
<div class="t" style="left:132.00px;top:534px;font:normal normal 12px/14px 'Liberation Sans',sans-serif;color:#f4f4f4;white-space:nowrap;transform-origin:0 0;transform:scaleX(0.9183);">10_DJ_scratch</div>
<div class="t" style="left:212.10px;top:534px;font:normal bold 12px/14px 'Liberation Sans',sans-serif;color:#c2c2c8;white-space:nowrap;transform-origin:0 0;transform:scaleX(1.0700);">(1/1)</div>
<svg style="left:106.40px;top:553.18px;" width="13.60" height="11.40" viewBox="0 0 18 16" preserveAspectRatio="none"><defs><linearGradient id="g57" x1="0" y1="0" x2="1" y2="1"><stop offset="0" stop-color="#f2f2f2"/><stop offset="1" stop-color="#8e8e8e"/></linearGradient></defs><path d="M0.8 3 Q0.8 1 2.4 1 H6.6 L8.6 3.4 H0.8Z" fill="#dcdcdc"/><rect x="0.8" y="3.2" width="16.4" height="12.2" rx="0.8" fill="url(#g57)"/></svg>
<svg style="left:90.60px;top:554.98px;" width="7.60" height="8.40" viewBox="0 0 7.6 8.4" preserveAspectRatio="none"><path d="M0 0 L7.6 4.2 L0 8.4Z" fill="#3a3a3a"/></svg>
<div class="t" style="left:132.00px;top:552px;font:normal normal 12px/14px 'Liberation Sans',sans-serif;color:#f4f4f4;white-space:nowrap;transform-origin:0 0;transform:scaleX(0.9244);">11_Interactive_music</div>
<div class="t" style="left:242.60px;top:552px;font:normal bold 12px/14px 'Liberation Sans',sans-serif;color:#c2c2c8;white-space:nowrap;transform-origin:0 0;transform:scaleX(1.0700);">(3/</div>
<svg style="left:106.40px;top:571.77px;" width="13.60" height="11.40" viewBox="0 0 18 16" preserveAspectRatio="none"><defs><linearGradient id="g58" x1="0" y1="0" x2="1" y2="1"><stop offset="0" stop-color="#f2f2f2"/><stop offset="1" stop-color="#8e8e8e"/></linearGradient></defs><path d="M0.8 3 Q0.8 1 2.4 1 H6.6 L8.6 3.4 H0.8Z" fill="#dcdcdc"/><rect x="0.8" y="3.2" width="16.4" height="12.2" rx="0.8" fill="url(#g58)"/></svg>
<svg style="left:90.60px;top:573.57px;" width="7.60" height="8.40" viewBox="0 0 7.6 8.4" preserveAspectRatio="none"><path d="M0 0 L7.6 4.2 L0 8.4Z" fill="#3a3a3a"/></svg>
<div class="t" style="left:132.00px;top:571px;font:normal normal 12px/14px 'Liberation Sans',sans-serif;color:#f4f4f4;white-space:nowrap;transform-origin:0 0;transform:scaleX(0.8910);">12_Surround_Ambient</div>
<div class="t" style="left:245.60px;top:571px;font:normal bold 12px/14px 'Liberation Sans',sans-serif;color:#c2c2c8;white-space:nowrap;transform-origin:0 0;transform:scaleX(1.0700);">(2</div>
<svg style="left:106.40px;top:590.36px;" width="13.60" height="11.40" viewBox="0 0 18 16" preserveAspectRatio="none"><defs><linearGradient id="g59" x1="0" y1="0" x2="1" y2="1"><stop offset="0" stop-color="#f2f2f2"/><stop offset="1" stop-color="#8e8e8e"/></linearGradient></defs><path d="M0.8 3 Q0.8 1 2.4 1 H6.6 L8.6 3.4 H0.8Z" fill="#dcdcdc"/><rect x="0.8" y="3.2" width="16.4" height="12.2" rx="0.8" fill="url(#g59)"/></svg>
<svg style="left:90.60px;top:592.16px;" width="7.60" height="8.40" viewBox="0 0 7.6 8.4" preserveAspectRatio="none"><path d="M0 0 L7.6 4.2 L0 8.4Z" fill="#3a3a3a"/></svg>
<div class="t" style="left:132.00px;top:589px;font:normal normal 12px/14px 'Liberation Sans',sans-serif;color:#f4f4f4;white-space:nowrap;transform-origin:0 0;transform:scaleX(0.9156);">13_Movement_of_envelop</div>
<svg style="left:106.40px;top:608.95px;" width="13.60" height="11.40" viewBox="0 0 18 16" preserveAspectRatio="none"><defs><linearGradient id="g60" x1="0" y1="0" x2="1" y2="1"><stop offset="0" stop-color="#f2f2f2"/><stop offset="1" stop-color="#8e8e8e"/></linearGradient></defs><path d="M0.8 3 Q0.8 1 2.4 1 H6.6 L8.6 3.4 H0.8Z" fill="#dcdcdc"/><rect x="0.8" y="3.2" width="16.4" height="12.2" rx="0.8" fill="url(#g60)"/></svg>
<svg style="left:90.60px;top:610.75px;" width="7.60" height="8.40" viewBox="0 0 7.6 8.4" preserveAspectRatio="none"><path d="M0 0 L7.6 4.2 L0 8.4Z" fill="#3a3a3a"/></svg>
<div class="t" style="left:132.00px;top:608px;font:normal normal 12px/14px 'Liberation Sans',sans-serif;color:#f4f4f4;white-space:nowrap;transform-origin:0 0;transform:scaleX(0.8721);">Kansei</div>
<div class="t" style="left:170.60px;top:608px;font:normal bold 12px/14px 'Liberation Sans',sans-serif;color:#c2c2c8;white-space:nowrap;transform-origin:0 0;transform:scaleX(1.0700);">(2/2)</div>
</div>
<div style="left:280.90px;top:160.40px;width:17.10px;height:455.60px;background:#000;"></div>
<div style="left:282.20px;top:161.00px;width:14.80px;height:16.00px;background:#58585c;"></div>
<svg style="left:286.00px;top:167.00px;" width="7.40" height="4.60" viewBox="0 0 7.4 4.6" preserveAspectRatio="none"><path d="M0 4.6 H7.4 L3.7 0Z" fill="#1e1e22"/></svg>
<div style="left:282.20px;top:178.00px;width:14.80px;height:346.80px;background:#535357;"></div>
<div style="left:282.20px;top:526.40px;width:14.80px;height:73.40px;background:#282834;"></div>
<div style="left:282.20px;top:601.00px;width:14.80px;height:14.60px;background:#58585c;"></div>
<svg style="left:286.00px;top:606.40px;" width="7.40" height="4.60" viewBox="0 0 7.4 4.6" preserveAspectRatio="none"><path d="M0 0 H7.4 L3.7 4.6Z" fill="#1e1e22"/></svg>
<svg style="left:261.00px;top:180.29px;" width="13.60" height="14.40" viewBox="0 0 20 20" preserveAspectRatio="none"><defs><linearGradient id="g61" x1="0" y1="0" x2="0" y2="1"><stop offset="0" stop-color="#a8bccc"/><stop offset="1" stop-color="#4c6a80"/></linearGradient></defs><path d="M0.6 0.6 H19.4 V19.4 H2.4 L0.6 17.6Z" fill="url(#g61)" stroke="#3c5464" stroke-width="0.8"/><rect x="3.4" y="0.8" width="13.2" height="9.4" fill="#f4f8ff"/><rect x="3.4" y="9.2" width="13.2" height="1.2" fill="#9cb4c8"/><rect x="4.6" y="12.8" width="11" height="6.6" fill="#3e5668"/><rect x="11.6" y="14" width="2.6" height="4.4" fill="#a8d0f4"/></svg>
<svg style="left:97.40px;top:307.40px;" width="140.70" height="22.00" viewBox="0 0 140.7 22" preserveAspectRatio="none"><rect x="1.10" y="1.10" width="138.50" height="19.80" rx="6" fill="none" stroke="#ec1c1c" stroke-width="2.2"/></svg>
<div style="left:19.50px;top:616.00px;width:278.50px;height:12.00px;background:linear-gradient(#000,#111);"></div>
<div style="left:16.00px;top:628.00px;width:1296.00px;height:12.00px;background:#fff;"></div>
<svg style="left:23.60px;top:621.00px;" width="7.60" height="7.00" viewBox="0 0 7.6 7" preserveAspectRatio="none"><path d="M0 0 H7.6 L3.8 7Z" fill="#fff"/></svg>
<div class="t" style="left:36.00px;top:619px;font:italic bold 11.5px/14px 'Liberation Sans',sans-serif;color:#fff;white-space:nowrap;transform-origin:0 0;transform:scaleX(0.9627);">Materials</div>
<div style="left:0.00px;top:628.00px;width:1312.00px;height:12.00px;background:#fff;"></div>
<div style="left:309.40px;top:19.00px;width:984.60px;height:21.00px;background:#303030;"></div>
<div style="left:310.60px;top:20.00px;width:77.40px;height:18.40px;background:#424242;"></div>
<div style="left:388.00px;top:19.80px;width:906.00px;height:19.40px;background:linear-gradient(#707070,#707070 92%,#4a4a4a);"></div>
<div style="left:388.00px;top:19.80px;width:906.00px;height:1.00px;background:#5e5e5e;"></div>
<div class="t" style="left:315.60px;top:24px;font:normal normal 11px/13px 'Liberation Sans',sans-serif;color:#c4c4c4;white-space:nowrap;transform-origin:0 0;transform:scaleX(0.8705);">Selected Object</div>
<div class="t" style="left:397.00px;top:23px;font:normal normal 12px/14px 'Liberation Sans',sans-serif;color:#cfcfcf;white-space:nowrap;transform-origin:0 0;transform:scaleX(0.9361);">WorkUnits</div>
<div class="t" style="left:467.60px;top:23px;font:normal normal 12px/14px 'Liberation Sans',sans-serif;color:#cfcfcf;white-space:nowrap;transform-origin:0 0;transform:scaleX(0.9349);">WorkUnit_0</div>
<div class="t" style="left:544.00px;top:23px;font:normal normal 12px/14px 'Liberation Sans',sans-serif;color:#cfcfcf;white-space:nowrap;transform-origin:0 0;transform:scaleX(0.9337);">CueSheetFolder</div>
<div class="t" style="left:642.00px;top:23px;font:normal normal 12px/14px 'Liberation Sans',sans-serif;color:#cfcfcf;white-space:nowrap;transform-origin:0 0;transform:scaleX(0.8922);">DemoProj</div>
<div class="t" style="left:707.60px;top:23px;font:normal normal 12px/14px 'Liberation Sans',sans-serif;color:#cfcfcf;white-space:nowrap;transform-origin:0 0;transform:scaleX(0.9322);">00_SoundEffects</div>
<div class="t" style="left:811.60px;top:23px;font:normal normal 12px/14px 'Liberation Sans',sans-serif;color:#cfcfcf;white-space:nowrap;transform-origin:0 0;transform:scaleX(0.9130);">gun1_High</div>
<svg style="left:456.40px;top:25.60px;" width="4.60" height="7.60" viewBox="0 0 4.6 7.6" preserveAspectRatio="none"><path d="M0 0 L4.6 3.8 L0 7.6Z" fill="#dcdcdc"/></svg>
<svg style="left:534.40px;top:25.60px;" width="4.60" height="7.60" viewBox="0 0 4.6 7.6" preserveAspectRatio="none"><path d="M0 0 L4.6 3.8 L0 7.6Z" fill="#dcdcdc"/></svg>
<svg style="left:632.00px;top:25.60px;" width="4.60" height="7.60" viewBox="0 0 4.6 7.6" preserveAspectRatio="none"><path d="M0 0 L4.6 3.8 L0 7.6Z" fill="#dcdcdc"/></svg>
<svg style="left:697.40px;top:25.60px;" width="4.60" height="7.60" viewBox="0 0 4.6 7.6" preserveAspectRatio="none"><path d="M0 0 L4.6 3.8 L0 7.6Z" fill="#dcdcdc"/></svg>
<svg style="left:801.00px;top:25.60px;" width="4.60" height="7.60" viewBox="0 0 4.6 7.6" preserveAspectRatio="none"><path d="M0 0 L4.6 3.8 L0 7.6Z" fill="#dcdcdc"/></svg>
<svg style="left:873.60px;top:25.60px;" width="4.60" height="7.60" viewBox="0 0 4.6 7.6" preserveAspectRatio="none"><path d="M0 0 L4.6 3.8 L0 7.6Z" fill="#dcdcdc"/></svg>
<svg style="left:884.60px;top:23.00px;" width="13.00" height="13.00" viewBox="0 0 20 20" preserveAspectRatio="none"><defs><linearGradient id="g62" x1="0" y1="0" x2="0" y2="1"><stop offset="0" stop-color="#eef3fa"/><stop offset="1" stop-color="#b4c4dc"/></linearGradient></defs><rect x="1" y="1" width="18" height="18" rx="4.5" fill="url(#g62)" stroke="#8898b8" stroke-width="1.2"/><text x="10" y="15.4" text-anchor="middle" font-family="Liberation Serif,serif" font-weight="bold" font-size="15.5" fill="#163a8c">T</text></svg>
<div class="t" style="left:904.40px;top:23px;font:normal normal 12px/14px 'Liberation Sans',sans-serif;color:#ffffff;white-space:nowrap;transform-origin:0 0;transform:scaleX(0.9130);">gun1_High</div>
<div style="left:309.40px;top:40.00px;width:984.60px;height:13.80px;background:linear-gradient(#000,#000 45%,#222);"></div>
<div style="left:314.40px;top:43.60px;width:7.00px;height:7.00px;background:#fff;"></div>
<div class="t" style="left:326.60px;top:41px;font:italic bold 10.5px/13px 'Liberation Sans',sans-serif;color:#fff;white-space:nowrap;transform-origin:0 0;transform:scaleX(1.0979);">Time Line</div>
<div style="left:309.40px;top:53.80px;width:984.60px;height:33.60px;background:#404040;"></div>
<div style="left:309.40px;top:53.80px;width:135.00px;height:33.20px;background:#6e6e6e;"></div>
<div style="left:309.40px;top:54.40px;width:34.40px;height:3.30px;background:#a0525a;"></div>
<div style="left:309.40px;top:57.70px;width:394.40px;height:5.00px;background:#4e607e;border:1px solid #1e3050;box-sizing:border-box;"></div>
<div style="left:309.40px;top:87.20px;width:184.60px;height:3.20px;background:#343434;"></div>
<div style="left:494.00px;top:87.20px;width:800.00px;height:3.20px;background:#3e3e3e;"></div>
<div style="left:309.40px;top:90.40px;width:184.60px;height:32.00px;background:#49494d;border-top:1px solid #5c5c60;box-sizing:border-box;"></div>
<div style="left:309.40px;top:122.30px;width:184.60px;height:1.60px;background:#2a2a2c;"></div>
<div style="left:315.00px;top:95.40px;width:21.40px;height:22.40px;background:linear-gradient(#47474b,#3e3e42);border:1px solid #333;border-radius:3.5px;box-sizing:border-box;box-shadow:0 1px 0 #5e5e62;"></div>
<div style="left:371.00px;top:95.40px;width:22.40px;height:22.40px;background:linear-gradient(#47474b,#3e3e42);border:1px solid #333;border-radius:3.5px;box-sizing:border-box;box-shadow:0 1px 0 #5e5e62;"></div>
<div style="left:400.60px;top:95.40px;width:22.40px;height:22.40px;background:linear-gradient(#47474b,#3e3e42);border:1px solid #333;border-radius:3.5px;box-sizing:border-box;box-shadow:0 1px 0 #5e5e62;"></div>
<div style="left:430.60px;top:95.40px;width:22.40px;height:22.40px;background:linear-gradient(#47474b,#3e3e42);border:1px solid #333;border-radius:3.5px;box-sizing:border-box;box-shadow:0 1px 0 #5e5e62;"></div>
<div style="left:320.20px;top:105.50px;width:10.40px;height:2.10px;background:#050505;"></div>
<div style="left:324.40px;top:101.40px;width:2.10px;height:10.40px;background:#050505;"></div>
<svg style="left:376.00px;top:100.40px;" width="12.40" height="12.40" viewBox="0 0 20 20" preserveAspectRatio="none"><defs><linearGradient id="g63" x1="0" y1="0" x2="0" y2="1"><stop offset="0" stop-color="#ffc890"/><stop offset="0.42" stop-color="#ff9a38"/><stop offset="0.62" stop-color="#f47c0c"/><stop offset="0.82" stop-color="#cc7a16"/><stop offset="1" stop-color="#988028"/></linearGradient><linearGradient id="g64" x1="0" y1="0" x2="0" y2="1"><stop offset="0" stop-color="#fff" stop-opacity="0.95"/><stop offset="1" stop-color="#fff" stop-opacity="0.1"/></linearGradient><radialGradient id="g65" cx="0.5" cy="0.5" r="0.5"><stop offset="0.82" stop-color="#000" stop-opacity="0"/><stop offset="1" stop-color="#402000" stop-opacity="0.45"/></radialGradient></defs><ellipse cx="10" cy="10" rx="9.7" ry="9.4" fill="url(#g63)"/><ellipse cx="10" cy="10" rx="9.7" ry="9.4" fill="url(#g65)"/><ellipse cx="10" cy="6" rx="7.2" ry="4.8" fill="url(#g64)"/></svg>
<svg style="left:401.00px;top:97.00px;" width="22.00" height="18.00" viewBox="0 0 22 18" preserveAspectRatio="none"><path d="M1.4 15.6 L10.2 3 L13.2 12.2 L19.3 1.5" fill="none" stroke="#e23c4c" stroke-width="1.3" stroke-linejoin="round"/><circle cx="1.5" cy="15.5" r="1" fill="#e23c4c"/></svg>
<svg style="left:435.80px;top:99.60px;" width="13.60" height="13.40" viewBox="0 0 13.6 13.4" preserveAspectRatio="none"><path d="M0 0.8H6M7.6 0.8H13.6M0 4.7H6M7.6 4.7H13.6M0 8.6H6M7.6 8.6H13.6M0 12.5H6M7.6 12.5H13.6" stroke="#050505" stroke-width="1.15"/></svg>
<div style="left:494.00px;top:90.00px;width:5.60px;height:263.00px;background:#3a3a3c;"></div>
<div style="left:499.60px;top:90.40px;width:794.40px;height:10.00px;background:#282836;"></div>
<div style="left:499.60px;top:92.60px;width:103.00px;height:6.60px;background:#3e3e4c;border-radius:0 3.3px 3.3px 0;"></div>
<div style="left:499.60px;top:100.40px;width:794.40px;height:23.20px;background:#1f1f2b;"></div>
<div class="t" style="left:499.85px;top:101px;font:normal normal 12.5px/15px 'Liberation Sans',sans-serif;color:#fff;white-space:nowrap;transform-origin:0 0;transform:scaleX(0.8728);">0:00:00</div>
<div style="left:498.95px;top:113.60px;width:1.50px;height:6.40px;background:#fff;"></div>
<div class="t" style="left:777.35px;top:101px;font:normal normal 12.5px/15px 'Liberation Sans',sans-serif;color:#fff;white-space:nowrap;transform-origin:0 0;transform:scaleX(0.8728);">0:01:00</div>
<div style="left:776.45px;top:113.60px;width:1.50px;height:6.40px;background:#fff;"></div>
<div class="t" style="left:1054.85px;top:101px;font:normal normal 12.5px/15px 'Liberation Sans',sans-serif;color:#fff;white-space:nowrap;transform-origin:0 0;transform:scaleX(0.8728);">0:02:00</div>
<div style="left:1053.95px;top:113.60px;width:1.50px;height:6.40px;background:#fff;"></div>
<div style="left:521.88px;top:118.40px;width:1.10px;height:1.60px;background:#e8e8e8;"></div>
<div style="left:545.10px;top:116.00px;width:1.10px;height:4.00px;background:#e8e8e8;"></div>
<div style="left:568.12px;top:118.40px;width:1.10px;height:1.60px;background:#e8e8e8;"></div>
<div style="left:591.35px;top:116.00px;width:1.10px;height:4.00px;background:#e8e8e8;"></div>
<div style="left:614.38px;top:118.40px;width:1.10px;height:1.60px;background:#e8e8e8;"></div>
<div style="left:637.60px;top:116.00px;width:1.10px;height:4.00px;background:#e8e8e8;"></div>
<div style="left:660.62px;top:118.40px;width:1.10px;height:1.60px;background:#e8e8e8;"></div>
<div style="left:683.85px;top:116.00px;width:1.10px;height:4.00px;background:#e8e8e8;"></div>
<div style="left:706.88px;top:118.40px;width:1.10px;height:1.60px;background:#e8e8e8;"></div>
<div style="left:730.10px;top:116.00px;width:1.10px;height:4.00px;background:#e8e8e8;"></div>
<div style="left:753.12px;top:118.40px;width:1.10px;height:1.60px;background:#e8e8e8;"></div>
<div style="left:799.38px;top:118.40px;width:1.10px;height:1.60px;background:#e8e8e8;"></div>
<div style="left:822.60px;top:116.00px;width:1.10px;height:4.00px;background:#e8e8e8;"></div>
<div style="left:845.62px;top:118.40px;width:1.10px;height:1.60px;background:#e8e8e8;"></div>
<div style="left:868.85px;top:116.00px;width:1.10px;height:4.00px;background:#e8e8e8;"></div>
<div style="left:891.88px;top:118.40px;width:1.10px;height:1.60px;background:#e8e8e8;"></div>
<div style="left:915.10px;top:116.00px;width:1.10px;height:4.00px;background:#e8e8e8;"></div>
<div style="left:938.12px;top:118.40px;width:1.10px;height:1.60px;background:#e8e8e8;"></div>
<div style="left:961.35px;top:116.00px;width:1.10px;height:4.00px;background:#e8e8e8;"></div>
<div style="left:984.38px;top:118.40px;width:1.10px;height:1.60px;background:#e8e8e8;"></div>
<div style="left:1007.60px;top:116.00px;width:1.10px;height:4.00px;background:#e8e8e8;"></div>
<div style="left:1030.62px;top:118.40px;width:1.10px;height:1.60px;background:#e8e8e8;"></div>
<div style="left:1076.88px;top:118.40px;width:1.10px;height:1.60px;background:#e8e8e8;"></div>
<div style="left:1100.10px;top:116.00px;width:1.10px;height:4.00px;background:#e8e8e8;"></div>
<div style="left:1123.12px;top:118.40px;width:1.10px;height:1.60px;background:#e8e8e8;"></div>
<div style="left:1146.35px;top:116.00px;width:1.10px;height:4.00px;background:#e8e8e8;"></div>
<div style="left:1169.38px;top:118.40px;width:1.10px;height:1.60px;background:#e8e8e8;"></div>
<div style="left:1192.60px;top:116.00px;width:1.10px;height:4.00px;background:#e8e8e8;"></div>
<div style="left:1215.62px;top:118.40px;width:1.10px;height:1.60px;background:#e8e8e8;"></div>
<div style="left:1238.85px;top:116.00px;width:1.10px;height:4.00px;background:#e8e8e8;"></div>
<div style="left:1261.88px;top:118.40px;width:1.10px;height:1.60px;background:#e8e8e8;"></div>
<div style="left:499.60px;top:123.60px;width:776.40px;height:78.40px;background:#6e6e7b;"></div>
<div style="left:499.60px;top:202.00px;width:776.40px;height:3.40px;background:#6a6a70;border-top:1px solid #48484e;border-bottom:1px solid #48484e;box-sizing:border-box;"></div>
<div style="left:499.60px;top:205.40px;width:776.40px;height:80.60px;background:#61616a;"></div>
<div style="left:545.00px;top:123.60px;width:1.00px;height:78.40px;background:#34344a;"></div>
<div style="left:545.00px;top:205.40px;width:1.00px;height:80.60px;background:#2e2e3c;"></div>
<div style="left:591.25px;top:123.60px;width:1.00px;height:78.40px;background:#34344a;"></div>
<div style="left:591.25px;top:205.40px;width:1.00px;height:80.60px;background:#2e2e3c;"></div>
<div style="left:637.50px;top:123.60px;width:1.00px;height:78.40px;background:#34344a;"></div>
<div style="left:637.50px;top:205.40px;width:1.00px;height:80.60px;background:#2e2e3c;"></div>
<div style="left:683.75px;top:123.60px;width:1.00px;height:78.40px;background:#34344a;"></div>
<div style="left:683.75px;top:205.40px;width:1.00px;height:80.60px;background:#2e2e3c;"></div>
<div style="left:730.00px;top:123.60px;width:1.00px;height:78.40px;background:#34344a;"></div>
<div style="left:730.00px;top:205.40px;width:1.00px;height:80.60px;background:#2e2e3c;"></div>
<div style="left:776.25px;top:123.60px;width:1.00px;height:78.40px;background:#34344a;"></div>
<div style="left:776.25px;top:205.40px;width:1.00px;height:80.60px;background:#2e2e3c;"></div>
<div style="left:822.50px;top:123.60px;width:1.00px;height:78.40px;background:#34344a;"></div>
<div style="left:822.50px;top:205.40px;width:1.00px;height:80.60px;background:#2e2e3c;"></div>
<div style="left:868.75px;top:123.60px;width:1.00px;height:78.40px;background:#34344a;"></div>
<div style="left:868.75px;top:205.40px;width:1.00px;height:80.60px;background:#2e2e3c;"></div>
<div style="left:915.00px;top:123.60px;width:1.00px;height:78.40px;background:#34344a;"></div>
<div style="left:915.00px;top:205.40px;width:1.00px;height:80.60px;background:#2e2e3c;"></div>
<div style="left:961.25px;top:123.60px;width:1.00px;height:78.40px;background:#34344a;"></div>
<div style="left:961.25px;top:205.40px;width:1.00px;height:80.60px;background:#2e2e3c;"></div>
<div style="left:1007.50px;top:123.60px;width:1.00px;height:78.40px;background:#34344a;"></div>
<div style="left:1007.50px;top:205.40px;width:1.00px;height:80.60px;background:#2e2e3c;"></div>
<div style="left:1053.75px;top:123.60px;width:1.00px;height:78.40px;background:#34344a;"></div>
<div style="left:1053.75px;top:205.40px;width:1.00px;height:80.60px;background:#2e2e3c;"></div>
<div style="left:1100.00px;top:123.60px;width:1.00px;height:78.40px;background:#34344a;"></div>
<div style="left:1100.00px;top:205.40px;width:1.00px;height:80.60px;background:#2e2e3c;"></div>
<div style="left:1146.25px;top:123.60px;width:1.00px;height:78.40px;background:#34344a;"></div>
<div style="left:1146.25px;top:205.40px;width:1.00px;height:80.60px;background:#2e2e3c;"></div>
<div style="left:1192.50px;top:123.60px;width:1.00px;height:78.40px;background:#34344a;"></div>
<div style="left:1192.50px;top:205.40px;width:1.00px;height:80.60px;background:#2e2e3c;"></div>
<div style="left:1238.75px;top:123.60px;width:1.00px;height:78.40px;background:#34344a;"></div>
<div style="left:1238.75px;top:205.40px;width:1.00px;height:80.60px;background:#2e2e3c;"></div>
<div style="left:499.00px;top:123.60px;width:1.20px;height:210.40px;background:#f0f0f0;"></div>
<div style="left:499.60px;top:206.40px;width:194.00px;height:19.60px;background:#ff0000;"></div>
<div style="left:499.60px;top:226.00px;width:194.00px;height:60.00px;background:#8a4955;border-right:1.2px solid #a01828;border-bottom:1.2px solid #a01828;box-sizing:border-box;"></div>
<svg style="left:499.60px;top:226.00px;overflow:hidden;" width="194.00" height="59.40" viewBox="0 0 194 59.4" preserveAspectRatio="none"><path d="M0.4 6.9 L1.5 2.8 L2.7 4.5 L3.8 10.8 L5.0 11.2 L6.1 10.9 L7.3 6.7 L8.4 10.7 L9.6 4.8 L10.7 5.8 L11.9 1.4 L13.0 3.2 L14.2 11.9 L15.3 10.3 L16.5 12.0 L17.6 7.3 L18.8 8.6 L19.9 14.2 L21.1 8.0 L22.2 12.1 L23.4 11.0 L24.5 7.9 L25.7 13.7 L26.8 11.3 L28.0 9.7 L29.1 7.8 L30.3 13.3 L31.4 16.0 L32.6 17.2 L33.7 11.3 L34.9 10.8 L36.0 12.6 L37.2 13.9 L38.3 12.3 L39.5 15.5 L40.6 18.9 L41.8 15.1 L42.9 14.4 L44.1 17.8 L45.2 20.6 L46.4 20.1 L47.5 21.1 L48.7 21.1 L49.8 19.4 L51.0 20.2 L52.1 15.8 L53.3 12.3 L54.4 15.5 L55.6 13.8 L56.7 7.0 L57.9 13.6 L59.0 12.0 L60.2 8.2 L61.3 14.9 L62.5 11.6 L63.6 6.3 L64.8 11.2 L65.9 10.3 L67.1 8.6 L68.2 9.0 L69.4 13.5 L70.5 16.2 L71.7 16.7 L72.8 15.5 L74.0 14.5 L75.1 17.6 L76.3 16.8 L77.4 17.5 L78.6 12.7 L79.7 15.8 L80.9 15.1 L82.0 11.4 L83.2 14.8 L84.3 18.0 L85.5 16.2 L86.6 12.8 L87.8 19.1 L88.9 15.6 L90.1 15.8 L91.2 16.1 L92.4 14.1 L93.5 18.5 L94.7 19.4 L95.8 17.2 L97.0 18.8 L98.1 16.0 L99.3 16.1 L100.4 16.6 L101.6 20.3 L102.7 19.8 L103.9 21.8 L105.0 20.7 L106.2 17.3 L107.3 17.7 L108.5 17.9 L109.6 21.8 L110.8 22.1 L111.9 20.3 L113.1 19.6 L114.2 20.7 L115.4 23.4 L116.5 20.2 L117.7 21.2 L118.8 23.7 L120.0 23.4 L121.1 21.4 L122.3 23.7 L123.4 22.9 L124.6 25.1 L125.7 23.0 L126.9 25.4 L128.0 23.4 L129.2 25.3 L130.3 26.1 L131.5 24.3 L132.6 25.6 L133.8 26.0 L134.9 25.5 L136.1 26.8 L137.2 27.0 L138.4 27.1 L139.5 27.4 L140.7 27.1 L141.8 26.9 L143.0 27.3 L144.1 27.3 L145.3 27.4 L146.4 27.6 L147.6 28.2 L148.7 28.1 L149.9 27.7 L151.0 28.2 L152.2 28.0 L153.3 28.5 L154.5 28.4 L155.6 28.0 L156.8 28.3 L157.9 28.1 L159.1 28.4 L160.2 28.5 L161.4 28.6 L162.5 28.6 L163.7 28.6 L164.8 28.5 L166.0 28.8 L167.1 28.7 L168.3 29.1 L169.4 29.1 L170.6 29.2 L171.7 28.9 L172.9 29.2 L174.0 29.0 L175.2 29.0 L176.3 29.3 L177.5 29.3 L178.6 29.1 L179.8 29.4 L180.9 29.3 L182.1 29.5 L183.2 29.4 L184.4 29.5 L185.5 29.6 L186.7 29.5 L187.8 29.6 L189.0 29.5 L190.1 29.6 L190.1 30.0 L189.0 30.1 L187.8 30.1 L186.7 30.1 L185.5 30.1 L184.4 30.1 L183.2 30.1 L182.1 30.2 L180.9 30.2 L179.8 30.3 L178.6 30.4 L177.5 30.4 L176.3 30.6 L175.2 30.6 L174.0 30.4 L172.9 30.6 L171.7 30.8 L170.6 30.7 L169.4 30.6 L168.3 30.7 L167.1 30.6 L166.0 31.1 L164.8 30.7 L163.7 31.2 L162.5 31.3 L161.4 31.1 L160.2 31.3 L159.1 31.2 L157.9 31.2 L156.8 31.5 L155.6 31.4 L154.5 31.3 L153.3 31.6 L152.2 31.9 L151.0 31.7 L149.9 31.8 L148.7 31.8 L147.6 32.4 L146.4 31.7 L145.3 31.6 L144.1 32.4 L143.0 33.1 L141.8 33.3 L140.7 32.7 L139.5 33.6 L138.4 32.9 L137.2 33.3 L136.1 32.9 L134.9 32.9 L133.8 34.6 L132.6 35.1 L131.5 34.7 L130.3 33.3 L129.2 34.9 L128.0 35.5 L126.9 36.3 L125.7 36.5 L124.6 34.7 L123.4 35.0 L122.3 38.1 L121.1 36.3 L120.0 38.2 L118.8 38.5 L117.7 37.5 L116.5 39.1 L115.4 38.9 L114.2 39.9 L113.1 38.6 L111.9 41.0 L110.8 37.6 L109.6 38.0 L108.5 38.9 L107.3 42.7 L106.2 39.9 L105.0 41.6 L103.9 39.3 L102.7 38.0 L101.6 41.3 L100.4 43.0 L99.3 43.7 L98.1 45.2 L97.0 40.3 L95.8 44.5 L94.7 44.7 L93.5 42.0 L92.4 44.8 L91.2 47.3 L90.1 40.1 L88.9 41.3 L87.8 48.1 L86.6 41.9 L85.5 42.9 L84.3 41.8 L83.2 45.3 L82.0 50.1 L80.9 42.6 L79.7 44.8 L78.6 43.1 L77.4 50.0 L76.3 45.4 L75.1 43.5 L74.0 42.6 L72.8 43.8 L71.7 43.0 L70.5 48.7 L69.4 46.5 L68.2 50.6 L67.1 50.6 L65.9 43.5 L64.8 49.9 L63.6 51.3 L62.5 50.5 L61.3 49.4 L60.2 48.1 L59.0 50.8 L57.9 46.8 L56.7 45.0 L55.6 51.3 L54.4 45.6 L53.3 48.3 L52.1 46.8 L51.0 42.1 L49.8 43.4 L48.7 39.3 L47.5 43.1 L46.4 39.3 L45.2 42.1 L44.1 44.1 L42.9 41.7 L41.8 47.7 L40.6 45.9 L39.5 46.1 L38.3 48.8 L37.2 45.0 L36.0 46.6 L34.9 44.4 L33.7 47.1 L32.6 48.4 L31.4 47.0 L30.3 50.0 L29.1 44.0 L28.0 46.0 L26.8 52.4 L25.7 49.6 L24.5 51.3 L23.4 47.3 L22.2 50.8 L21.1 49.4 L19.9 47.2 L18.8 45.8 L17.6 49.8 L16.5 52.6 L15.3 55.9 L14.2 47.5 L13.0 50.0 L11.9 47.2 L10.7 52.0 L9.6 59.7 L8.4 50.4 L7.3 59.0 L6.1 49.1 L5.0 54.0 L3.8 55.2 L2.7 53.4 L1.5 49.3 L0.4 50.6Z" fill="#5c0000" stroke="#140000" stroke-width="0.9" stroke-linejoin="round"/></svg>
<div style="left:545.00px;top:226.00px;width:1.00px;height:59.00px;background:#6c2c38;"></div>
<div style="left:591.25px;top:226.00px;width:1.00px;height:59.00px;background:#6c2c38;"></div>
<div style="left:637.50px;top:226.00px;width:1.00px;height:59.00px;background:#6c2c38;"></div>
<div style="left:683.75px;top:226.00px;width:1.00px;height:59.00px;background:#6c2c38;"></div>
<svg style="left:502.60px;top:210.40px;" width="13.20" height="13.20" viewBox="0 0 20 20" preserveAspectRatio="none"><defs><radialGradient id="g66" cx="0.4" cy="0.3" r="0.8"><stop offset="0" stop-color="#e8f4fc"/><stop offset="0.55" stop-color="#8cb8d8"/><stop offset="1" stop-color="#4a7aa0"/></radialGradient></defs><circle cx="10" cy="10" r="9.4" fill="url(#g66)" stroke="#5a7890" stroke-width="0.6"/><path d="M8.6 14 V4.6 Q12 5 13.6 8.4 Q11.6 6.8 9.8 6.8 V14.2 A2.6 2.1 0 1 1 8.6 12.4" fill="#2858b0"/><ellipse cx="7.2" cy="14.2" rx="2.5" ry="2" fill="#2858b0"/></svg>
<div class="t" style="left:520.70px;top:210px;font:normal normal 12px/14px 'Liberation Sans',sans-serif;color:#3c0000;white-space:nowrap;transform-origin:0 0;transform:scaleX(0.9489);">gun1_High.wav</div>
<div style="left:499.60px;top:286.00px;width:776.40px;height:18.60px;background:#1450a2;border-top:1px solid #0c2c60;box-sizing:border-box;"></div>
<div style="left:499.60px;top:304.60px;width:776.40px;height:29.20px;background:#3e527a;"></div>
<div style="left:545.00px;top:304.60px;width:1.00px;height:29.20px;background:#34466c;"></div>
<div style="left:591.25px;top:304.60px;width:1.00px;height:29.20px;background:#34466c;"></div>
<div style="left:637.50px;top:304.60px;width:1.00px;height:29.20px;background:#34466c;"></div>
<div style="left:683.75px;top:304.60px;width:1.00px;height:29.20px;background:#34466c;"></div>
<div style="left:730.00px;top:304.60px;width:1.00px;height:29.20px;background:#34466c;"></div>
<div style="left:776.25px;top:304.60px;width:1.00px;height:29.20px;background:#34466c;"></div>
<div style="left:822.50px;top:304.60px;width:1.00px;height:29.20px;background:#34466c;"></div>
<div style="left:868.75px;top:304.60px;width:1.00px;height:29.20px;background:#34466c;"></div>
<div style="left:915.00px;top:304.60px;width:1.00px;height:29.20px;background:#34466c;"></div>
<div style="left:961.25px;top:304.60px;width:1.00px;height:29.20px;background:#34466c;"></div>
<div style="left:1007.50px;top:304.60px;width:1.00px;height:29.20px;background:#34466c;"></div>
<div style="left:1053.75px;top:304.60px;width:1.00px;height:29.20px;background:#34466c;"></div>
<div style="left:1100.00px;top:304.60px;width:1.00px;height:29.20px;background:#34466c;"></div>
<div style="left:1146.25px;top:304.60px;width:1.00px;height:29.20px;background:#34466c;"></div>
<div style="left:1192.50px;top:304.60px;width:1.00px;height:29.20px;background:#34466c;"></div>
<div style="left:1238.75px;top:304.60px;width:1.00px;height:29.20px;background:#34466c;"></div>
<svg style="left:499.60px;top:304.60px;overflow:hidden;" width="776.40" height="29.20" viewBox="0 0 776.4 29.2" preserveAspectRatio="none"><path d="M0 29.2 L2.0 20.4 L3.3 26.0 L5.4 13.7 L6.7 22.7 L8.6 16.2 L9.6 24.3 L10.6 17.3 L13.0 20.5 L15.1 19.9 L16.1 23.5 L17.8 17.8 L20.2 27.9 L21.4 16.3 L22.5 28.5 L23.8 18.8 L25.2 23.5 L26.4 16.4 L27.8 27.1 L29.7 20.2 L31.5 25.7 L33.6 19.6 L35.2 22.1 L37.0 7.9 L39.5 23.3 L41.0 6.2 L42.4 27.9 L43.7 4.8 L44.8 23.2 L46.1 16.1 L47.4 25.8 L48.7 8.4 L51.1 15.8 L52.5 1.7 L53.9 26.3 L55.1 7.5 L56.8 27.1 L57.8 8.8 L58.7 27.3 L60.7 7.1 L62.6 12.5 L64.9 9.7 L66.0 16.0 L68.2 3.1 L70.1 10.0 L71.7 7.0 L73.9 12.8 L75.8 2.3 L77.8 28.6 L78.8 9.1 L81.1 15.7 L82.7 5.0 L83.6 12.0 L85.4 6.9 L86.4 17.2 L88.3 10.3 L89.5 14.3 L91.1 8.9 L93.1 15.7 L94.2 12.8 L95.5 20.1 L96.5 13.7 L97.8 18.4 L99.5 10.1 L101.1 19.8 L103.4 18.8 L105.8 25.8 L107.3 1.6 L108.6 22.6 L109.7 6.6 L111.5 18.0 L113.6 7.6 L115.6 22.9 L116.5 13.8 L118.2 20.6 L119.6 9.8 L121.8 23.8 L124.0 12.7 L126.0 20.1 L128.3 9.4 L130.2 26.0 L131.2 13.7 L133.5 22.6 L135.1 11.1 L136.3 22.5 L138.1 15.6 L140.4 20.5 L142.4 14.0 L144.0 18.9 L146.2 14.0 L147.3 20.6 L149.5 5.8 L150.9 16.2 L152.0 10.1 L153.2 22.8 L155.3 12.2 L157.8 20.7 L159.2 13.9 L160.2 27.1 L162.2 4.5 L163.8 25.3 L164.7 11.1 L166.1 20.2 L168.2 7.7 L169.4 27.2 L171.7 10.0 L173.9 20.4 L176.1 7.0 L177.7 19.2 L179.8 4.6 L182.1 16.0 L183.7 13.6 L185.7 18.2 L187.2 6.6 L189.0 23.6 L190.8 4.9 L192.2 27.1 L193.3 7.5 L194.3 15.0 L196.0 12.9 L196.9 25.8 L199.1 17.5 L200.7 27.2 L202.1 17.1 L203.0 20.9 L204.8 12.6 L207.2 28.6 L209.1 10.8 L210.3 16.1 L212.5 13.2 L213.9 20.7 L215.2 6.9 L217.7 17.7 L219.5 10.8 L221.9 26.2 L223.0 4.4 L224.0 26.2 L225.9 16.1 L228.4 21.8 L230.4 4.7 L231.3 14.9 L232.5 11.6 L233.4 26.5 L235.6 20.2 L236.8 23.4 L237.8 10.4 L239.5 22.7 L241.6 11.1 L242.6 23.4 L243.5 14.8 L244.5 21.4 L245.9 4.8 L247.2 12.9 L248.6 6.8 L249.9 23.8 L252.1 17.2 L253.1 25.7 L254.5 15.3 L255.8 20.6 L257.8 19.7 L259.9 22.3 L261.3 11.0 L262.8 20.5 L264.0 5.9 L265.0 25.2 L267.1 3.1 L269.6 28.2 L271.5 8.7 L273.1 26.0 L275.1 6.5 L277.3 18.0 L279.0 11.0 L280.5 19.7 L281.6 11.5 L283.9 19.2 L285.6 2.2 L286.8 10.9 L288.4 19.7 L290.6 21.9 L291.7 10.6 L292.9 17.1 L295.0 18.0 L296.6 23.7 L298.3 19.5 L300.2 26.4 L301.5 11.5 L303.3 20.0 L305.2 9.9 L306.4 27.5 L307.4 7.1 L308.4 25.2 L309.6 12.8 L311.6 26.9 L312.9 1.8 L314.7 26.1 L316.1 13.9 L317.4 21.2 L318.8 2.3 L321.1 23.0 L322.0 11.7 L323.8 15.8 L325.2 5.8 L326.9 26.9 L327.9 1.9 L329.6 7.7 L331.8 12.1 L334.3 21.2 L336.5 17.5 L338.4 23.3 L339.8 10.9 L342.1 19.8 L343.7 8.6 L345.2 27.2 L346.2 2.2 L348.0 16.7 L349.7 12.3 L351.5 19.8 L353.0 6.3 L355.0 15.4 L356.5 5.9 L357.8 12.4 L359.4 11.6 L360.4 26.0 L362.1 8.2 L363.0 19.2 L364.6 4.0 L365.6 14.5 L367.7 19.2 L370.2 21.9 L371.8 1.6 L374.2 15.2 L375.2 2.4 L376.7 15.6 L378.7 18.5 L379.9 20.9 L381.5 10.9 L382.9 27.6 L384.7 2.6 L387.1 23.6 L388.9 7.8 L390.3 15.4 L391.4 3.5 L393.9 14.1 L396.2 11.2 L398.0 23.8 L399.9 12.4 L400.9 20.2 L402.6 2.7 L404.6 28.8 L406.3 12.9 L407.9 16.8 L409.8 12.0 L410.7 26.5 L411.9 10.6 L413.7 19.5 L414.8 9.2 L417.2 27.8 L419.3 7.4 L421.5 27.1 L423.2 7.5 L424.6 16.0 L425.9 16.6 L428.2 25.3 L429.2 12.4 L431.4 25.2 L432.5 20.0 L434.4 23.0 L435.8 13.3 L437.1 22.9 L438.0 7.1 L440.3 15.6 L441.5 10.2 L442.6 28.5 L444.4 6.8 L446.7 17.0 L448.7 10.5 L450.4 24.6 L452.6 19.8 L453.5 27.2 L455.4 4.7 L456.9 15.4 L458.6 5.2 L460.7 10.2 L462.5 6.0 L464.8 12.9 L466.0 12.0 L467.9 22.8 L468.9 15.2 L471.3 27.9 L473.2 15.1 L475.1 19.2 L476.5 8.8 L478.7 13.7 L480.9 5.6 L483.3 27.4 L485.4 15.1 L487.6 18.8 L488.7 12.1 L489.7 20.3 L490.6 10.5 L491.9 24.1 L494.2 11.7 L495.9 17.5 L497.4 10.6 L499.6 24.1 L501.7 12.8 L502.7 20.8 L504.7 12.9 L507.1 25.6 L508.3 5.8 L510.0 23.3 L511.3 4.0 L512.5 13.5 L513.5 7.5 L515.7 13.5 L517.2 10.8 L518.7 20.3 L519.9 20.5 L521.2 23.7 L522.4 4.3 L524.1 11.4 L525.5 7.0 L526.9 23.2 L528.0 5.8 L529.6 13.9 L531.8 9.1 L533.0 26.8 L534.2 4.3 L535.3 26.6 L536.7 12.6 L537.9 17.5 L538.9 2.7 L540.4 9.9 L541.6 9.1 L543.5 27.4 L545.0 14.0 L547.1 19.7 L548.2 8.5 L550.1 23.9 L551.8 17.7 L553.9 23.1 L555.9 3.1 L557.9 11.3 L559.3 8.4 L561.2 26.0 L562.9 5.0 L564.2 14.5 L566.1 8.8 L568.5 24.5 L570.1 9.0 L572.5 25.2 L574.7 3.9 L576.5 25.0 L578.1 4.7 L580.0 13.7 L581.2 1.7 L583.2 23.8 L584.6 1.1 L585.6 26.2 L587.1 8.4 L589.1 27.0 L591.3 4.2 L593.0 23.5 L594.1 11.0 L596.3 17.0 L597.5 6.5 L599.9 24.6 L601.5 3.3 L602.9 16.4 L604.9 9.2 L606.3 27.1 L607.2 11.4 L609.2 27.2 L610.7 7.6 L612.7 16.8 L613.6 14.7 L615.9 18.7 L617.6 3.2 L618.6 22.5 L619.6 10.7 L620.7 23.7 L622.9 12.0 L625.1 22.9 L626.9 4.1 L629.2 10.5 L630.9 5.3 L633.0 11.1 L634.2 10.8 L635.3 20.5 L636.9 12.3 L638.6 16.5 L640.2 3.7 L642.0 10.2 L644.2 9.1 L645.2 15.7 L647.1 6.8 L649.5 22.3 L651.6 8.5 L652.6 15.3 L654.0 3.9 L655.7 11.0 L657.1 9.3 L658.9 18.2 L660.5 9.7 L661.9 13.8 L663.2 5.1 L664.6 24.9 L665.6 5.3 L667.7 13.9 L668.6 11.2 L669.8 17.3 L671.9 5.4 L673.8 13.3 L675.7 7.9 L676.9 16.2 L678.1 13.8 L679.0 17.4 L681.1 10.7 L683.2 19.2 L684.6 10.2 L686.2 14.4 L687.1 8.6 L688.2 15.8 L689.1 18.3 L690.7 20.7 L692.1 18.2 L693.2 23.4 L694.1 15.1 L696.1 22.4 L697.2 5.3 L698.1 16.4 L699.1 13.2 L701.2 17.2 L703.0 14.4 L705.0 17.7 L706.9 4.4 L707.9 24.5 L709.2 14.6 L711.3 23.1 L712.7 14.8 L714.5 19.3 L715.9 6.4 L717.8 15.6 L720.1 6.6 L722.2 16.7 L724.1 4.5 L726.3 24.8 L728.1 16.5 L729.5 19.5 L731.2 7.7 L733.5 17.4 L735.0 12.5 L736.9 16.5 L738.9 6.0 L741.2 16.5 L743.0 16.5 L745.4 28.2 L746.6 6.3 L748.7 17.0 L750.2 7.6 L751.5 23.8 L752.5 10.1 L754.7 19.0 L756.8 4.9 L758.6 13.3 L759.7 13.0 L761.7 25.1 L762.8 9.2 L763.8 17.6 L765.8 7.8 L767.0 17.0 L767.9 14.9 L770.4 20.3 L772.4 11.9 L774.0 16.8 L775.2 3.5 L776.2 27.6 L777.9 14.3 L780.2 17.6 L776.4 29.2Z" fill="#0b1f3f" stroke="#03060c" stroke-width="1.0" stroke-linejoin="miter"/></svg>
<svg style="left:502.60px;top:289.20px;" width="13.20" height="13.20" viewBox="0 0 20 20" preserveAspectRatio="none"><defs><radialGradient id="g67" cx="0.4" cy="0.3" r="0.8"><stop offset="0" stop-color="#e8f4fc"/><stop offset="0.55" stop-color="#8cb8d8"/><stop offset="1" stop-color="#4a7aa0"/></radialGradient></defs><circle cx="10" cy="10" r="9.4" fill="url(#g67)" stroke="#5a7890" stroke-width="0.6"/><path d="M8.6 14 V4.6 Q12 5 13.6 8.4 Q11.6 6.8 9.8 6.8 V14.2 A2.6 2.1 0 1 1 8.6 12.4" fill="#2858b0"/><ellipse cx="7.2" cy="14.2" rx="2.5" ry="2" fill="#2858b0"/></svg>
<div class="t" style="left:520.70px;top:289px;font:normal normal 12px/14px 'Liberation Sans',sans-serif;color:#fff;white-space:nowrap;transform-origin:0 0;transform:scaleX(0.9288);">bomb2.wav</div>
<svg style="left:499.60px;top:240.00px;" width="776.40" height="50.00" viewBox="0 0 776.4 50" preserveAspectRatio="none"><path d="M0 44.6 L9.2 44.4 L54.5 6.4 L208 15.1 L776.4 15.1" fill="none" stroke="#ffff00" stroke-width="1.9" stroke-linejoin="round"/><circle cx="9.2" cy="44.2" r="2.1" fill="#7a7a50" stroke="#c8c800" stroke-width="0.8"/><circle cx="54.5" cy="6.4" r="2.3" fill="#6e6e6e" stroke="#d8d800" stroke-width="0.9"/><circle cx="208" cy="15.1" r="2.4" fill="#ff9a00" stroke="#ffe800" stroke-width="1"/></svg>
<div style="left:1276.20px;top:123.60px;width:17.80px;height:211.60px;background:#000;"></div>
<div style="left:1277.30px;top:125.20px;width:15.70px;height:15.70px;background:#58585c;"></div>
<svg style="left:1281.40px;top:130.60px;" width="7.40" height="4.60" viewBox="0 0 7.4 4.6" preserveAspectRatio="none"><path d="M0 4.6 H7.4 L3.7 0Z" fill="#1e1e22"/></svg>
<div style="left:1277.30px;top:142.20px;width:15.70px;height:148.60px;background:#535357;"></div>
<div style="left:1277.30px;top:292.00px;width:15.70px;height:25.00px;background:#282834;"></div>
<div style="left:1277.30px;top:317.00px;width:15.70px;height:15.60px;background:#58585c;"></div>
<svg style="left:1281.40px;top:322.80px;" width="7.40" height="4.60" viewBox="0 0 7.4 4.6" preserveAspectRatio="none"><path d="M0 0 H7.4 L3.7 4.6Z" fill="#1e1e22"/></svg>
<div style="left:499.60px;top:334.00px;width:776.70px;height:19.40px;background:#000;"></div>
<div style="left:1276.30px;top:334.00px;width:17.70px;height:19.60px;background:#424242;"></div>
<div style="left:500.60px;top:335.20px;width:774.80px;height:16.80px;background:#2a2a36;"></div>
<div style="left:500.60px;top:335.20px;width:15.40px;height:16.80px;background:#58585c;"></div>
<svg style="left:505.60px;top:340.20px;" width="4.80" height="6.80" viewBox="0 0 4.8 6.8" preserveAspectRatio="none"><path d="M4.8 0 L0 3.4 L4.8 6.8Z" fill="#1e1e22"/></svg>
<div style="left:517.20px;top:335.20px;width:98.00px;height:16.80px;background:#535357;"></div>
<div style="left:1257.90px;top:335.20px;width:17.30px;height:16.80px;background:#58585c;"></div>
<svg style="left:1264.60px;top:340.20px;" width="4.80" height="6.80" viewBox="0 0 4.8 6.8" preserveAspectRatio="none"><path d="M0 0 L4.8 3.4 L0 6.8Z" fill="#1e1e22"/></svg>
<div style="left:308.80px;top:123.40px;width:185.40px;height:78.40px;background:linear-gradient(to right,rgba(187,187,197,0),rgba(187,187,197,0.9)),linear-gradient(#b2b2be,#b6b6c2 35%,#c6c6d2);border-top:1px solid #d4d4dc;box-sizing:border-box;"></div>
<div style="left:313.40px;top:126.40px;width:10.00px;height:73.20px;background:#ff8000;"></div>
<svg style="left:326.20px;top:127.40px;" width="16.40" height="16.40" viewBox="0 0 20 20" preserveAspectRatio="none"><defs><linearGradient id="g68" x1="0" y1="0" x2="0" y2="1"><stop offset="0" stop-color="#ffc890"/><stop offset="0.42" stop-color="#ff9a38"/><stop offset="0.62" stop-color="#f47c0c"/><stop offset="0.82" stop-color="#cc7a16"/><stop offset="1" stop-color="#988028"/></linearGradient><linearGradient id="g69" x1="0" y1="0" x2="0" y2="1"><stop offset="0" stop-color="#fff" stop-opacity="0.95"/><stop offset="1" stop-color="#fff" stop-opacity="0.1"/></linearGradient><radialGradient id="g70" cx="0.5" cy="0.5" r="0.5"><stop offset="0.82" stop-color="#000" stop-opacity="0"/><stop offset="1" stop-color="#402000" stop-opacity="0.45"/></radialGradient></defs><ellipse cx="10" cy="10" rx="9.7" ry="9.4" fill="url(#g68)"/><ellipse cx="10" cy="10" rx="9.7" ry="9.4" fill="url(#g70)"/><ellipse cx="10" cy="6" rx="7.2" ry="4.8" fill="url(#g69)"/></svg>
<div class="t" style="left:351.00px;top:128px;font:normal bold 12px/14px 'Liberation Sans',sans-serif;color:#060606;white-space:nowrap;transform-origin:0 0;transform:scaleX(0.9758);">gun1_High</div>
<svg style="left:326.60px;top:144.80px;" width="16.00" height="15.60" viewBox="0 0 20 20" preserveAspectRatio="none"><rect x="0.8" y="0.8" width="18.4" height="18.4" rx="3.5" fill="#d6d6da" stroke="#b4b4b8" stroke-width="1"/><path d="M2 8.5H18M2 12H18M2 15.5H18" stroke="#bcbcc0" stroke-width="1"/><path d="M3 15 L6 13.5 L9 4.5 Q10 3 11 4.5 L14 13.5 L17.5 13.5" fill="none" stroke="#a0a0a4" stroke-width="1.2"/></svg>
<svg style="left:345.20px;top:144.80px;" width="15.60" height="15.60" viewBox="0 0 20 20" preserveAspectRatio="none"><defs><linearGradient id="g71" x1="0" y1="0" x2="1" y2="1"><stop offset="0" stop-color="#cfcfcf"/><stop offset="1" stop-color="#969696"/></linearGradient></defs><rect x="0.8" y="0.8" width="18.4" height="18.4" rx="3.5" fill="url(#g71)" stroke="#a4a4a4" stroke-width="0.8"/><path d="M4.5 5 H15.5" stroke="#3a3a3a" stroke-width="1.8"/><path d="M5.2 16.5 V8.5 H14.8 V16.5 M10 8.5 V16.5" stroke="#3a3a3a" stroke-width="2" fill="none"/></svg>
<div style="left:372.80px;top:146.00px;width:109.20px;height:13.80px;background:linear-gradient(#06245a,#003a8c 35%,#0052c4 70%,#1478ff);border-radius:6.9px;"></div>
<svg style="left:468.00px;top:145.80px;" width="14.20" height="14.20" viewBox="0 0 20 20" preserveAspectRatio="none"><defs><radialGradient id="g72" cx="0.4" cy="0.35" r="0.7"><stop offset="0" stop-color="#ffffff"/><stop offset="0.6" stop-color="#e4e4e4"/><stop offset="1" stop-color="#8a8a8a"/></radialGradient></defs><circle cx="10" cy="10" r="9.6" fill="url(#g72)"/></svg>
<div style="left:325.80px;top:163.00px;width:165.40px;height:16.80px;background:#3e424e;border-radius:2px;"></div>
<div class="t" style="left:371.90px;top:165px;font:normal normal 12.5px/15px 'Liberation Sans',sans-serif;color:#fff;white-space:nowrap;transform-origin:0 0;transform:scaleX(0.9025);">No Automation</div>
<svg style="left:477.60px;top:169.00px;" width="8.20" height="5.20" viewBox="0 0 8.2 5.2" preserveAspectRatio="none"><path d="M0 0 H8.2 L4.1 5.2Z" fill="#e0e0e0"/></svg>
<div style="left:344.20px;top:182.00px;width:147.00px;height:18.00px;background:#4169e1;border-radius:2px;"></div>
<div class="t" style="left:389.25px;top:185px;font:normal normal 12.5px/15px 'Liberation Sans',sans-serif;color:#fff;white-space:nowrap;transform-origin:0 0;transform:scaleX(0.9272);">Polyphonic</div>
<svg style="left:477.60px;top:188.60px;" width="8.20" height="5.20" viewBox="0 0 8.2 5.2" preserveAspectRatio="none"><path d="M0 0 H8.2 L4.1 5.2Z" fill="#fff"/></svg>
<div style="left:308.80px;top:201.80px;width:185.40px;height:4.60px;background:#3a3a3c;"></div>
<div style="left:310.80px;top:206.20px;width:182.60px;height:78.60px;background:linear-gradient(to right,rgba(242,242,248,0),rgba(242,242,248,0.9)),linear-gradient(#dedee8,#e6e6f0 35%,#fbfbff);border:1.1px solid #19ecec;box-sizing:border-box;"></div>
<div style="left:313.60px;top:208.80px;width:9.60px;height:74.40px;background:#ff0000;"></div>
<svg style="left:326.80px;top:210.00px;" width="15.00" height="15.00" viewBox="0 0 20 20" preserveAspectRatio="none"><defs><linearGradient id="g73" x1="0" y1="0" x2="0" y2="1"><stop offset="0" stop-color="#f2f5fb"/><stop offset="1" stop-color="#b8c8e0"/></linearGradient></defs><rect x="1" y="1" width="18" height="18" rx="4" fill="url(#g73)" stroke="#586070" stroke-width="1.5"/><text x="10" y="16" text-anchor="middle" font-family="Liberation Serif,serif" font-size="17.5" fill="#143488">T</text></svg>
<div class="t" style="left:351.00px;top:210px;font:normal bold 12px/14px 'Liberation Sans',sans-serif;color:#060606;white-space:nowrap;transform-origin:0 0;transform:scaleX(0.9758);">gun1_High</div>
<svg style="left:326.60px;top:227.40px;" width="16.00" height="15.20" viewBox="0 0 20 20" preserveAspectRatio="none"><rect x="0.8" y="0.8" width="18.4" height="18.4" rx="3.5" fill="#d6d6da" stroke="#b4b4b8" stroke-width="1"/><path d="M2 8.5H18M2 12H18M2 15.5H18" stroke="#bcbcc0" stroke-width="1"/><path d="M3 15 L6 13.5 L9 4.5 Q10 3 11 4.5 L14 13.5 L17.5 13.5" fill="none" stroke="#a0a0a4" stroke-width="1.2"/></svg>
<svg style="left:345.20px;top:227.40px;" width="15.40" height="15.40" viewBox="0 0 20 20" preserveAspectRatio="none"><defs><linearGradient id="g74" x1="0" y1="0" x2="1" y2="1"><stop offset="0" stop-color="#cfcfcf"/><stop offset="1" stop-color="#969696"/></linearGradient></defs><rect x="0.8" y="0.8" width="18.4" height="18.4" rx="3.5" fill="url(#g74)" stroke="#a4a4a4" stroke-width="0.8"/><path d="M4.5 5 H15.5" stroke="#3a3a3a" stroke-width="1.8"/><path d="M5.2 16.5 V8.5 H14.8 V16.5 M10 8.5 V16.5" stroke="#3a3a3a" stroke-width="2" fill="none"/></svg>
<div style="left:372.80px;top:229.00px;width:109.20px;height:13.20px;background:linear-gradient(#06245a,#003a8c 35%,#0052c4 70%,#1478ff);border-radius:6.6px;"></div>
<svg style="left:468.60px;top:228.80px;" width="13.60" height="13.60" viewBox="0 0 20 20" preserveAspectRatio="none"><defs><radialGradient id="g75" cx="0.4" cy="0.35" r="0.7"><stop offset="0" stop-color="#ffffff"/><stop offset="0.6" stop-color="#e4e4e4"/><stop offset="1" stop-color="#8a8a8a"/></radialGradient></defs><circle cx="10" cy="10" r="9.6" fill="url(#g75)"/></svg>
<div style="left:325.80px;top:245.00px;width:165.40px;height:17.50px;background:#3e424e;border-radius:2px;"></div>
<div class="t" style="left:389.00px;top:247px;font:normal normal 12.5px/15px 'Liberation Sans',sans-serif;color:#fff;white-space:nowrap;transform-origin:0 0;transform:scaleX(0.9114);">Volume</div>
<svg style="left:477.60px;top:251.35px;" width="8.20" height="5.20" viewBox="0 0 8.2 5.2" preserveAspectRatio="none"><path d="M0 0 H8.2 L4.1 5.2Z" fill="#c8c8c8"/></svg>
<div style="left:329.20px;top:249.00px;width:12.60px;height:11.80px;background:#ffff00;"></div>
<div style="left:325.80px;top:264.80px;width:165.40px;height:18.20px;background:#fffff2;"></div>
<div class="t" style="left:395.65px;top:268px;font:normal normal 12.5px/15px 'Liberation Sans',sans-serif;color:#0a0a1e;white-space:nowrap;transform-origin:0 0;transform:scaleX(0.8868);">None</div>
<svg style="left:477.60px;top:271.40px;" width="8.20" height="5.20" viewBox="0 0 8.2 5.2" preserveAspectRatio="none"><path d="M0 0 H8.2 L4.1 5.2Z" fill="#000"/></svg>
<svg style="left:327.00px;top:266.20px;" width="16.80" height="16.20" viewBox="0 0 21 20" preserveAspectRatio="none"><rect x="0.8" y="0.8" width="19.4" height="18.4" rx="3.5" fill="#d4dce8" stroke="#38404c" stroke-width="1.2"/><circle cx="4.6" cy="10.2" r="1.7" fill="#e81010"/><circle cx="10" cy="10.2" r="1.7" fill="#222"/><circle cx="15.4" cy="10.2" r="1.7" fill="#222"/><path d="M4.6 10.2H16" stroke="#555" stroke-width="0.6"/></svg>
<div class="clip" style="left:308.8px;top:285.4px;width:185.4px;height:48.4px">
<div style="position:absolute;left:-308.8px;top:-285.4px;width:0;height:0">
<div style="left:308.80px;top:285.40px;width:185.40px;height:79.00px;background:linear-gradient(to right,rgba(187,187,197,0),rgba(187,187,197,0.9)),linear-gradient(#b2b2be,#b6b6c2 35%,#c6c6d2);border-top:1px solid #d4d4dc;box-sizing:border-box;"></div>
<div style="left:313.60px;top:288.40px;width:9.60px;height:60.00px;background:#3a64a6;"></div>
<svg style="left:326.80px;top:289.80px;" width="15.00" height="15.00" viewBox="0 0 20 20" preserveAspectRatio="none"><defs><linearGradient id="g76" x1="0" y1="0" x2="0" y2="1"><stop offset="0" stop-color="#f2f5fb"/><stop offset="1" stop-color="#b8c8e0"/></linearGradient></defs><rect x="1" y="1" width="18" height="18" rx="4" fill="url(#g76)" stroke="#586070" stroke-width="1.5"/><text x="10" y="16" text-anchor="middle" font-family="Liberation Serif,serif" font-size="17.5" fill="#143488">T</text></svg>
<div class="t" style="left:351.40px;top:290px;font:normal bold 12px/14px 'Liberation Sans',sans-serif;color:#060606;white-space:nowrap;transform-origin:0 0;transform:scaleX(0.9885);">Track</div>
<svg style="left:326.60px;top:307.00px;" width="16.00" height="15.40" viewBox="0 0 20 20" preserveAspectRatio="none"><rect x="0.8" y="0.8" width="18.4" height="18.4" rx="3.5" fill="#d6d6da" stroke="#b4b4b8" stroke-width="1"/><path d="M2 8.5H18M2 12H18M2 15.5H18" stroke="#bcbcc0" stroke-width="1"/><path d="M3 15 L6 13.5 L9 4.5 Q10 3 11 4.5 L14 13.5 L17.5 13.5" fill="none" stroke="#a0a0a4" stroke-width="1.2"/></svg>
<svg style="left:345.20px;top:307.00px;" width="15.40" height="15.40" viewBox="0 0 20 20" preserveAspectRatio="none"><defs><linearGradient id="g77" x1="0" y1="0" x2="1" y2="1"><stop offset="0" stop-color="#cfcfcf"/><stop offset="1" stop-color="#969696"/></linearGradient></defs><rect x="0.8" y="0.8" width="18.4" height="18.4" rx="3.5" fill="url(#g77)" stroke="#a4a4a4" stroke-width="0.8"/><path d="M4.5 5 H15.5" stroke="#3a3a3a" stroke-width="1.8"/><path d="M5.2 16.5 V8.5 H14.8 V16.5 M10 8.5 V16.5" stroke="#3a3a3a" stroke-width="2" fill="none"/></svg>
<div style="left:372.80px;top:308.40px;width:109.20px;height:13.60px;background:linear-gradient(#06245a,#003a8c 35%,#0052c4 70%,#1478ff);border-radius:6.8px;"></div>
<svg style="left:468.20px;top:308.20px;" width="14.00" height="14.00" viewBox="0 0 20 20" preserveAspectRatio="none"><defs><radialGradient id="g78" cx="0.4" cy="0.35" r="0.7"><stop offset="0" stop-color="#ffffff"/><stop offset="0.6" stop-color="#e4e4e4"/><stop offset="1" stop-color="#8a8a8a"/></radialGradient></defs><circle cx="10" cy="10" r="9.6" fill="url(#g78)"/></svg>
<div style="left:325.80px;top:325.00px;width:165.40px;height:17.00px;background:#3e424e;border-radius:2px;"></div>
<div class="t" style="left:371.90px;top:327px;font:normal normal 12.5px/15px 'Liberation Sans',sans-serif;color:#fff;white-space:nowrap;transform-origin:0 0;transform:scaleX(0.9025);">No Automation</div>
<svg style="left:477.60px;top:331.10px;" width="8.20" height="5.20" viewBox="0 0 8.2 5.2" preserveAspectRatio="none"><path d="M0 0 H8.2 L4.1 5.2Z" fill="#e0e0e0"/></svg>
</div></div>
<div style="left:308.80px;top:333.80px;width:185.40px;height:18.80px;background:#47474b;border-top:1px solid #303032;box-sizing:border-box;"></div>
<div style="left:314.00px;top:337.20px;width:84.00px;height:12.20px;background:#2c2c2e;border-radius:6.1px;"></div>
<svg style="left:331.90px;top:337.60px;" width="11.60" height="11.60" viewBox="0 0 20 20" preserveAspectRatio="none"><defs><radialGradient id="g79" cx="0.4" cy="0.35" r="0.7"><stop offset="0" stop-color="#fff"/><stop offset="0.6" stop-color="#e2e2e2"/><stop offset="1" stop-color="#8a8a8a"/></radialGradient></defs><circle cx="10" cy="10" r="9.6" fill="url(#g79)"/></svg>
<div style="left:404.80px;top:337.20px;width:83.80px;height:12.20px;background:#2c2c2e;border-radius:6.1px;"></div>
<svg style="left:468.60px;top:337.60px;" width="11.60" height="11.60" viewBox="0 0 20 20" preserveAspectRatio="none"><defs><radialGradient id="g80" cx="0.4" cy="0.35" r="0.7"><stop offset="0" stop-color="#fff"/><stop offset="0.6" stop-color="#e2e2e2"/><stop offset="1" stop-color="#8a8a8a"/></radialGradient></defs><circle cx="10" cy="10" r="9.6" fill="url(#g80)"/></svg>
<div style="left:309.40px;top:352.60px;width:984.60px;height:1.60px;background:#2e2e2e;"></div>
<div style="left:310.40px;top:354.20px;width:983.60px;height:13.00px;background:linear-gradient(#000,#030303 50%,#262626);"></div>
<svg style="left:314.60px;top:357.80px;" width="7.40" height="7.00" viewBox="0 0 7.4 7" preserveAspectRatio="none"><path d="M0 0 H7.4 L3.7 7Z" fill="#fff"/></svg>
<div class="t" style="left:326.60px;top:355px;font:italic bold 10.5px/13px 'Liberation Sans',sans-serif;color:#fff;white-space:nowrap;transform-origin:0 0;transform:scaleX(1.0781);">FX / AISAC</div>
<div class="t" style="left:431.40px;top:355px;font:italic normal 11.5px/14px 'Liberation Sans',sans-serif;color:#f4f4f4;white-space:nowrap;transform-origin:0 0;transform:scaleX(0.9942);">CriAtomCraftV2Root</div>
<div class="t" style="left:553.60px;top:355px;font:italic normal 11.5px/14px 'Liberation Sans',sans-serif;color:#f4f4f4;white-space:nowrap;transform-origin:0 0;transform:scaleX(1.0070);">WorkUnits</div>
<div class="t" style="left:626.60px;top:355px;font:italic normal 11.5px/14px 'Liberation Sans',sans-serif;color:#f4f4f4;white-space:nowrap;transform-origin:0 0;transform:scaleX(0.9988);">WorkUnit_0</div>
<div class="t" style="left:704.40px;top:355px;font:italic normal 11.5px/14px 'Liberation Sans',sans-serif;color:#f4f4f4;white-space:nowrap;transform-origin:0 0;transform:scaleX(0.9934);">CueSheetFolder</div>
<div class="t" style="left:806.60px;top:355px;font:italic normal 11.5px/14px 'Liberation Sans',sans-serif;color:#f4f4f4;white-space:nowrap;transform-origin:0 0;transform:scaleX(0.9662);">DemoProj</div>
<div class="t" style="left:875.40px;top:355px;font:italic normal 11.5px/14px 'Liberation Sans',sans-serif;color:#f4f4f4;white-space:nowrap;transform-origin:0 0;transform:scaleX(0.9727);">00_SoundEffects</div>
<div class="t" style="left:979.00px;top:355px;font:italic normal 11.5px/14px 'Liberation Sans',sans-serif;color:#f4f4f4;white-space:nowrap;transform-origin:0 0;transform:scaleX(0.9886);">gun1_High</div>
<div class="t" style="left:1073.00px;top:355px;font:italic normal 11.5px/14px 'Liberation Sans',sans-serif;color:#f4f4f4;white-space:nowrap;transform-origin:0 0;transform:scaleX(0.9886);">gun1_High</div>
<svg style="left:543.40px;top:357.40px;" width="4.80" height="7.40" viewBox="0 0 4.8 7.4" preserveAspectRatio="none"><path d="M0 0 L4.8 3.7 L0 7.4Z" fill="#f4f4f4"/></svg>
<svg style="left:615.60px;top:357.40px;" width="4.80" height="7.40" viewBox="0 0 4.8 7.4" preserveAspectRatio="none"><path d="M0 0 L4.8 3.7 L0 7.4Z" fill="#f4f4f4"/></svg>
<svg style="left:694.40px;top:357.40px;" width="4.80" height="7.40" viewBox="0 0 4.8 7.4" preserveAspectRatio="none"><path d="M0 0 L4.8 3.7 L0 7.4Z" fill="#f4f4f4"/></svg>
<svg style="left:795.40px;top:357.40px;" width="4.80" height="7.40" viewBox="0 0 4.8 7.4" preserveAspectRatio="none"><path d="M0 0 L4.8 3.7 L0 7.4Z" fill="#f4f4f4"/></svg>
<svg style="left:864.40px;top:357.40px;" width="4.80" height="7.40" viewBox="0 0 4.8 7.4" preserveAspectRatio="none"><path d="M0 0 L4.8 3.7 L0 7.4Z" fill="#f4f4f4"/></svg>
<svg style="left:968.60px;top:357.40px;" width="4.80" height="7.40" viewBox="0 0 4.8 7.4" preserveAspectRatio="none"><path d="M0 0 L4.8 3.7 L0 7.4Z" fill="#f4f4f4"/></svg>
<svg style="left:1042.00px;top:357.40px;" width="4.80" height="7.40" viewBox="0 0 4.8 7.4" preserveAspectRatio="none"><path d="M0 0 L4.8 3.7 L0 7.4Z" fill="#f4f4f4"/></svg>
<svg style="left:1052.60px;top:354.80px;" width="12.60" height="12.60" viewBox="0 0 20 20" preserveAspectRatio="none"><defs><linearGradient id="g81" x1="0" y1="0" x2="0" y2="1"><stop offset="0" stop-color="#eef3fa"/><stop offset="1" stop-color="#b4c4dc"/></linearGradient></defs><rect x="1" y="1" width="18" height="18" rx="4.5" fill="url(#g81)" stroke="#8898b8" stroke-width="1.2"/><text x="10" y="15.4" text-anchor="middle" font-family="Liberation Serif,serif" font-weight="bold" font-size="15.5" fill="#163a8c">T</text></svg>
<div style="left:309.40px;top:367.20px;width:984.60px;height:228.80px;background:#68676c;"></div>
<div style="left:318.40px;top:377.40px;width:963.40px;height:206.60px;background:#5c5b60;border:1px solid #7b7b7f;border-right-color:#4a4a4e;border-bottom-color:#4a4a4e;border-radius:4px;box-sizing:border-box;"></div>
<svg style="left:331.40px;top:390.20px;" width="14.20" height="14.20" viewBox="0 0 20 20" preserveAspectRatio="none"><defs><linearGradient id="g82" x1="0" y1="0" x2="0" y2="1"><stop offset="0" stop-color="#ffc890"/><stop offset="0.42" stop-color="#ff9a38"/><stop offset="0.62" stop-color="#f47c0c"/><stop offset="0.82" stop-color="#cc7a16"/><stop offset="1" stop-color="#988028"/></linearGradient><linearGradient id="g83" x1="0" y1="0" x2="0" y2="1"><stop offset="0" stop-color="#fff" stop-opacity="0.95"/><stop offset="1" stop-color="#fff" stop-opacity="0.1"/></linearGradient><radialGradient id="g84" cx="0.5" cy="0.5" r="0.5"><stop offset="0.82" stop-color="#000" stop-opacity="0"/><stop offset="1" stop-color="#402000" stop-opacity="0.45"/></radialGradient></defs><ellipse cx="10" cy="10" rx="9.7" ry="9.4" fill="url(#g82)"/><ellipse cx="10" cy="10" rx="9.7" ry="9.4" fill="url(#g84)"/><ellipse cx="10" cy="6" rx="7.2" ry="4.8" fill="url(#g83)"/></svg>
<div class="t" style="left:359.00px;top:389px;font:normal normal 12px/14px 'Liberation Sans',sans-serif;color:#f4f4f4;white-space:nowrap;transform-origin:0 0;transform:scaleX(0.8841);">Name</div>
<div style="left:449.00px;top:389.40px;width:171.00px;height:19.40px;background:#e8e8e8;border-radius:8.0px;overflow:hidden;"></div>
<div class="t" style="left:453.80px;top:393px;font:normal normal 12px/14px 'Liberation Sans',sans-serif;color:#10102e;white-space:nowrap;transform-origin:0 0;transform:scaleX(0.9233);">gun1_High</div>
<div class="t" style="left:626.40px;top:394px;font:normal normal 13.5px/16px 'Liberation Sans',sans-serif;color:#f4f4f4;white-space:nowrap;transform-origin:0 0;transform:scaleX(0.9228);">Comment</div>
<div style="left:686.20px;top:389.40px;width:531.60px;height:19.40px;background:#e8e8e8;border-radius:8.0px;overflow:hidden;"></div>
<div class="t" style="left:358.60px;top:415px;font:normal normal 12.5px/15px 'Liberation Sans',sans-serif;color:#f4f4f4;white-space:nowrap;transform-origin:0 0;transform:scaleX(0.8611);">Cue ID</div>
<div style="left:449.00px;top:415.40px;width:171.00px;height:19.20px;background:#e8e8e8;border-radius:8.0px;overflow:hidden;"></div>
<div class="t" style="left:532.00px;top:419px;font:normal normal 12.5px/15px 'Liberation Sans',sans-serif;color:#10102e;white-space:nowrap;transform-origin:0 0;transform:scaleX(0.8630);">0</div>
<div class="t" style="left:626.40px;top:419px;font:normal normal 13.5px/16px 'Liberation Sans',sans-serif;color:#f4f4f4;white-space:nowrap;transform-origin:0 0;transform:scaleX(0.9120);">UserData</div>
<div style="left:686.20px;top:415.40px;width:531.60px;height:19.20px;background:#e8e8e8;border-radius:8.0px;overflow:hidden;"></div>
<div class="t" style="left:359.40px;top:441px;font:normal normal 12.5px/15px 'Liberation Sans',sans-serif;color:#f4f4f4;white-space:nowrap;transform-origin:0 0;transform:scaleX(0.9077);">Type</div>
<div style="left:449.00px;top:441.20px;width:171.00px;height:18.40px;background:#e8e8e8;border-radius:8.0px;overflow:hidden;"><div style="left:147.2px;top:0;width:23.8px;height:18.4px;background:#c9c9c9;border-left:1px solid #a8a8a8;box-sizing:border-box"></div></div>
<svg style="left:603.90px;top:448.20px;" width="7.00" height="6.00" viewBox="0 0 7 6" preserveAspectRatio="none"><path d="M0 0 H7 L3.5 6Z" fill="#050505"/></svg>
<div class="t" style="left:494.30px;top:444px;font:normal normal 12.5px/15px 'Liberation Sans',sans-serif;color:#10102e;white-space:nowrap;transform-origin:0 0;transform:scaleX(0.9255);">Polyphonic</div>
<div class="t" style="left:626.40px;top:445px;font:normal normal 13.5px/16px 'Liberation Sans',sans-serif;color:#f4f4f4;white-space:nowrap;transform-origin:0 0;transform:scaleX(0.9237);">Category</div>
<div style="left:686.20px;top:441.20px;width:531.60px;height:18.40px;background:#e8e8e8;border-radius:8.0px;overflow:hidden;"><div style="left:480.2px;top:0;width:51.4px;height:18.4px;background:#c9c9c9;border-left:1px solid #a8a8a8;box-sizing:border-box"></div></div>
<div class="t" style="left:691.00px;top:444px;font:normal normal 12.5px/15px 'Liberation Sans',sans-serif;color:#303040;white-space:nowrap;transform-origin:0 0;transform:scaleX(0.9235);">SE</div>
<div class="t" style="left:1181.80px;top:444px;font:normal normal 12.5px/15px 'Liberation Sans',sans-serif;color:#707070;white-space:nowrap;transform-origin:0 0;transform:scaleX(1.0028);">Edit</div>
<div class="t" style="left:355.00px;top:468px;font:normal normal 12.5px/15px 'Liberation Sans',sans-serif;color:#f4f4f4;white-space:nowrap;transform-origin:0 0;transform:scaleX(0.8874);">Voice Behavior</div>
<div style="left:448.00px;top:468.80px;width:362.60px;height:19.40px;background:#e8e8e8;border-radius:8.0px;overflow:hidden;"><div style="left:338.2px;top:0;width:24.4px;height:19.4px;background:#c9c9c9;border-left:1px solid #a8a8a8;box-sizing:border-box"></div></div>
<svg style="left:794.20px;top:476.30px;" width="7.00" height="6.00" viewBox="0 0 7 6" preserveAspectRatio="none"><path d="M0 0 H7 L3.5 6Z" fill="#050505"/></svg>
<div class="t" style="left:599.20px;top:473px;font:normal normal 12.5px/15px 'Liberation Sans',sans-serif;color:#10102e;white-space:nowrap;transform-origin:0 0;transform:scaleX(0.9036);">Normal</div>
<div class="t" style="left:821.20px;top:470px;font:normal normal 12px/14px 'Liberation Sans',sans-serif;color:#f4f4f4;white-space:nowrap;transform-origin:0 0;transform:scaleX(0.8903);">Display Unit</div>
<div style="left:885.80px;top:468.20px;width:150.00px;height:18.60px;background:#e8e8e8;border-radius:8.0px;overflow:hidden;"><div style="left:125.4px;top:0;width:24.6px;height:18.6px;background:#c9c9c9;border-left:1px solid #a8a8a8;box-sizing:border-box"></div></div>
<svg style="left:1019.30px;top:475.30px;" width="7.00" height="6.00" viewBox="0 0 7 6" preserveAspectRatio="none"><path d="M0 0 H7 L3.5 6Z" fill="#050505"/></svg>
<div class="t" style="left:924.70px;top:472px;font:normal normal 12.5px/15px 'Liberation Sans',sans-serif;color:#10102e;white-space:nowrap;transform-origin:0 0;transform:scaleX(0.9061);">59.94 fps</div>
<div class="t" style="left:1056.80px;top:471px;font:normal normal 13px/16px 'Liberation Serif',serif;color:#d0d0d0;white-space:nowrap;transform-origin:0 0;transform:scaleX(0.9846);">4</div>
<div class="t" style="left:1087.00px;top:471px;font:normal normal 13px/16px 'Liberation Serif',serif;color:#d0d0d0;white-space:nowrap;transform-origin:0 0;transform:scaleX(0.9846);">4</div>
<svg style="left:1071.40px;top:472.60px;" width="7.00" height="12.60" viewBox="0 0 7 12.6" preserveAspectRatio="none"><path d="M6.2 0.4 L0.8 12.2" stroke="#d0d0d0" stroke-width="0.9"/></svg>
<div class="t" style="left:1112.00px;top:472px;font:normal normal 12.5px/15px 'Liberation Sans',sans-serif;color:#f4f4f4;white-space:nowrap;transform-origin:0 0;transform:scaleX(0.8638);">BPM</div>
<div style="left:1141.00px;top:468.80px;width:75.80px;height:18.20px;background:#dcdcdc;border-radius:8.0px;overflow:hidden;"></div>
<div class="t" style="left:1156.20px;top:472px;font:normal normal 12px/14px 'Liberation Sans',sans-serif;color:#6a6a6a;white-space:nowrap;transform-origin:0 0;transform:scaleX(0.9110);">120.0000</div>
<svg style="left:355.80px;top:499.40px;" width="211.80" height="76.60" viewBox="0 0 211.8 76.6" preserveAspectRatio="none"><rect x="0.70" y="0.70" width="210.40" height="75.20" rx="3.5" fill="none" stroke="#f8f8f8" stroke-width="1.4"/></svg>
<div style="left:363.60px;top:498.80px;width:79.80px;height:3.40px;background:#5c5b60;"></div>
<svg style="left:365.60px;top:491.60px;" width="12.80" height="12.80" viewBox="0 0 20 20" preserveAspectRatio="none"><defs><linearGradient id="g85" x1="0" y1="0" x2="1" y2="1"><stop offset="0" stop-color="#d4d4d8"/><stop offset="1" stop-color="#ffffff"/></linearGradient></defs><rect x="0.7" y="0.7" width="18.6" height="18.6" fill="url(#g85)" stroke="#585c6c" stroke-width="1.4"/><path d="M3.4 10.2 L8 15.4 L17 4.2" fill="none" stroke="#1464e4" stroke-width="2.9" stroke-linejoin="miter"/></svg>
<div class="t" style="left:381.50px;top:494px;font:normal normal 12.5px/15px 'Liberation Sans',sans-serif;color:#f4f4f4;white-space:nowrap;transform-origin:0 0;transform:scaleX(1.0077);">Cue Limits</div>
<div class="t" style="left:370.50px;top:520px;font:normal normal 14px/17px 'Liberation Sans',sans-serif;color:#f4f4f4;white-space:nowrap;transform-origin:0 0;transform:scaleX(0.9409);">Limits</div>
<div style="left:413.80px;top:518.00px;width:78.40px;height:19.40px;background:#e8e8e8;border-radius:8.0px;overflow:hidden;"></div>
<div class="t" style="left:448.80px;top:522px;font:normal normal 14px/17px 'Liberation Sans',sans-serif;color:#080810;white-space:nowrap;transform-origin:0 0;transform:scaleX(0.8733);">1</div>
<div class="t" style="left:369.60px;top:546px;font:normal normal 14px/17px 'Liberation Sans',sans-serif;color:#f4f4f4;white-space:nowrap;transform-origin:0 0;transform:scaleX(0.8698);">Type</div>
<div style="left:416.20px;top:547.00px;width:145.60px;height:18.60px;background:#e8e8e8;border-radius:8.0px;overflow:hidden;"><div style="left:116.4px;top:0;width:29.2px;height:18.6px;background:#c9c9c9;border-left:1px solid #a8a8a8;box-sizing:border-box"></div></div>
<svg style="left:543.00px;top:554.10px;" width="7.00" height="6.00" viewBox="0 0 7 6" preserveAspectRatio="none"><path d="M0 0 H7 L3.5 6Z" fill="#050505"/></svg>
<div class="t" style="left:442.00px;top:549px;font:normal normal 14px/17px 'Liberation Sans',sans-serif;color:#10102e;white-space:nowrap;transform-origin:0 0;transform:scaleX(0.8929);">Last Priority</div>
<svg style="left:582.80px;top:499.40px;" width="187.80" height="76.60" viewBox="0 0 187.8 76.6" preserveAspectRatio="none"><rect x="0.70" y="0.70" width="186.40" height="75.20" rx="3.5" fill="none" stroke="#f8f8f8" stroke-width="1.4"/></svg>
<div style="left:591.40px;top:498.80px;width:120.20px;height:3.40px;background:#5c5b60;"></div>
<div class="t" style="left:593.20px;top:493px;font:normal normal 13px/16px 'Liberation Sans',sans-serif;color:#f4f4f4;white-space:nowrap;transform-origin:0 0;transform:scaleX(0.9399);">Category Cue Priority</div>
<div class="t" style="left:594.20px;top:516px;font:normal normal 14px/17px 'Liberation Sans',sans-serif;color:#f4f4f4;white-space:nowrap;transform-origin:0 0;transform:scaleX(0.9491);">Value</div>
<div style="left:633.00px;top:513.00px;width:80.80px;height:18.80px;background:#e8e8e8;border-radius:8.0px;overflow:hidden;"></div>
<div class="t" style="left:669.30px;top:517px;font:normal normal 13px/16px 'Liberation Sans',sans-serif;color:#080810;white-space:nowrap;transform-origin:0 0;transform:scaleX(0.9128);">0</div>
<div class="t" style="left:594.20px;top:546px;font:normal normal 14px/17px 'Liberation Sans',sans-serif;color:#f4f4f4;white-space:nowrap;transform-origin:0 0;transform:scaleX(0.8698);">Type</div>
<div style="left:635.00px;top:544.60px;width:125.00px;height:19.20px;background:#e8e8e8;border-radius:8.0px;overflow:hidden;"><div style="left:96.2px;top:0;width:28.8px;height:19.2px;background:#c9c9c9;border-left:1px solid #a8a8a8;box-sizing:border-box"></div></div>
<svg style="left:741.40px;top:552.00px;" width="7.00" height="6.00" viewBox="0 0 7 6" preserveAspectRatio="none"><path d="M0 0 H7 L3.5 6Z" fill="#050505"/></svg>
<div class="t" style="left:650.80px;top:547px;font:normal normal 14px/17px 'Liberation Sans',sans-serif;color:#10102e;white-space:nowrap;transform-origin:0 0;transform:scaleX(0.8929);">Last Priority</div>
<svg style="left:349.10px;top:486.30px;" width="106.50" height="24.80" viewBox="0 0 106.5 24.8" preserveAspectRatio="none"><rect x="0.80" y="0.80" width="104.90" height="23.20" rx="6" fill="none" stroke="#e81c1c" stroke-width="1.6"/></svg>
<svg style="left:423.90px;top:516.30px;" width="55.70" height="24.40" viewBox="0 0 55.7 24.4" preserveAspectRatio="none"><rect x="0.80" y="0.80" width="54.10" height="22.80" rx="6" fill="none" stroke="#e81c1c" stroke-width="1.6"/></svg>
<div style="left:309.40px;top:596.00px;width:984.60px;height:19.00px;background:#29293f;"></div>
<div style="left:312.60px;top:596.20px;width:58.60px;height:15.80px;background:#cc9294;border-radius:0 0 3px 3px;"></div>
<div class="t" style="left:331.20px;top:597px;font:normal normal 11.5px/14px 'Liberation Sans',sans-serif;color:#0a0a0a;white-space:nowrap;transform-origin:0 0;transform:scaleX(1.0144);">Cue</div>
<div style="left:374.60px;top:596.20px;width:58.40px;height:15.80px;background:#6c6c6e;border-radius:0 0 3px 3px;"></div>
<div class="t" style="left:393.80px;top:597px;font:normal normal 11.5px/14px 'Liberation Sans',sans-serif;color:#0a0a0a;white-space:nowrap;transform-origin:0 0;transform:scaleX(0.9482);">FX1</div>
<div style="left:436.40px;top:596.20px;width:58.60px;height:15.80px;background:#6c6c6e;border-radius:0 0 3px 3px;"></div>
<div class="t" style="left:455.50px;top:597px;font:normal normal 11.5px/14px 'Liberation Sans',sans-serif;color:#0a0a0a;white-space:nowrap;transform-origin:0 0;transform:scaleX(0.9672);">FX2</div>
<div style="left:498.40px;top:596.20px;width:58.60px;height:15.80px;background:#6c6c6e;border-radius:0 0 3px 3px;"></div>
<div class="t" style="left:510.40px;top:597px;font:normal normal 11.5px/14px 'Liberation Sans',sans-serif;color:#0a0a0a;white-space:nowrap;transform-origin:0 0;transform:scaleX(1.0025);">AISAC</div>
<div style="left:560.20px;top:596.20px;width:103.60px;height:15.80px;background:#6c6c6e;border-radius:0 0 3px 3px;"></div>
<div class="t" style="left:565.80px;top:597px;font:normal normal 11.5px/14px 'Liberation Sans',sans-serif;color:#0a0a0a;white-space:nowrap;transform-origin:0 0;transform:scaleX(1.0399);">Selector/Random</div>
<div style="left:665.80px;top:596.20px;width:59.80px;height:15.80px;background:#6c6c6e;border-radius:0 0 3px 3px;"></div>
<div class="t" style="left:679.40px;top:597px;font:normal normal 11.5px/14px 'Liberation Sans',sans-serif;color:#0a0a0a;white-space:nowrap;transform-origin:0 0;transform:scaleX(1.0199);">Action</div>
<div style="left:727.60px;top:596.20px;width:60.00px;height:15.80px;background:#6c6c6e;border-radius:0 0 3px 3px;"></div>
<div class="t" style="left:745.30px;top:597px;font:normal normal 11.5px/14px 'Liberation Sans',sans-serif;color:#0a0a0a;white-space:nowrap;transform-origin:0 0;transform:scaleX(0.9622);">Sync</div>
<div style="left:309.40px;top:614.20px;width:984.60px;height:8.00px;background:#3e3e3e;"></div>
<div style="left:309.40px;top:617.20px;width:984.60px;height:5.00px;background:#4a4a4a;"></div>
<div style="left:309.40px;top:622.20px;width:984.60px;height:2.60px;background:#2e2e2e;"></div>
<div style="left:310.40px;top:624.80px;width:983.60px;height:3.20px;background:#686868;"></div>
<div style="left:1294.00px;top:19.00px;width:2.60px;height:609.00px;background:#3a3a3c;"></div>
</div></body></html>
